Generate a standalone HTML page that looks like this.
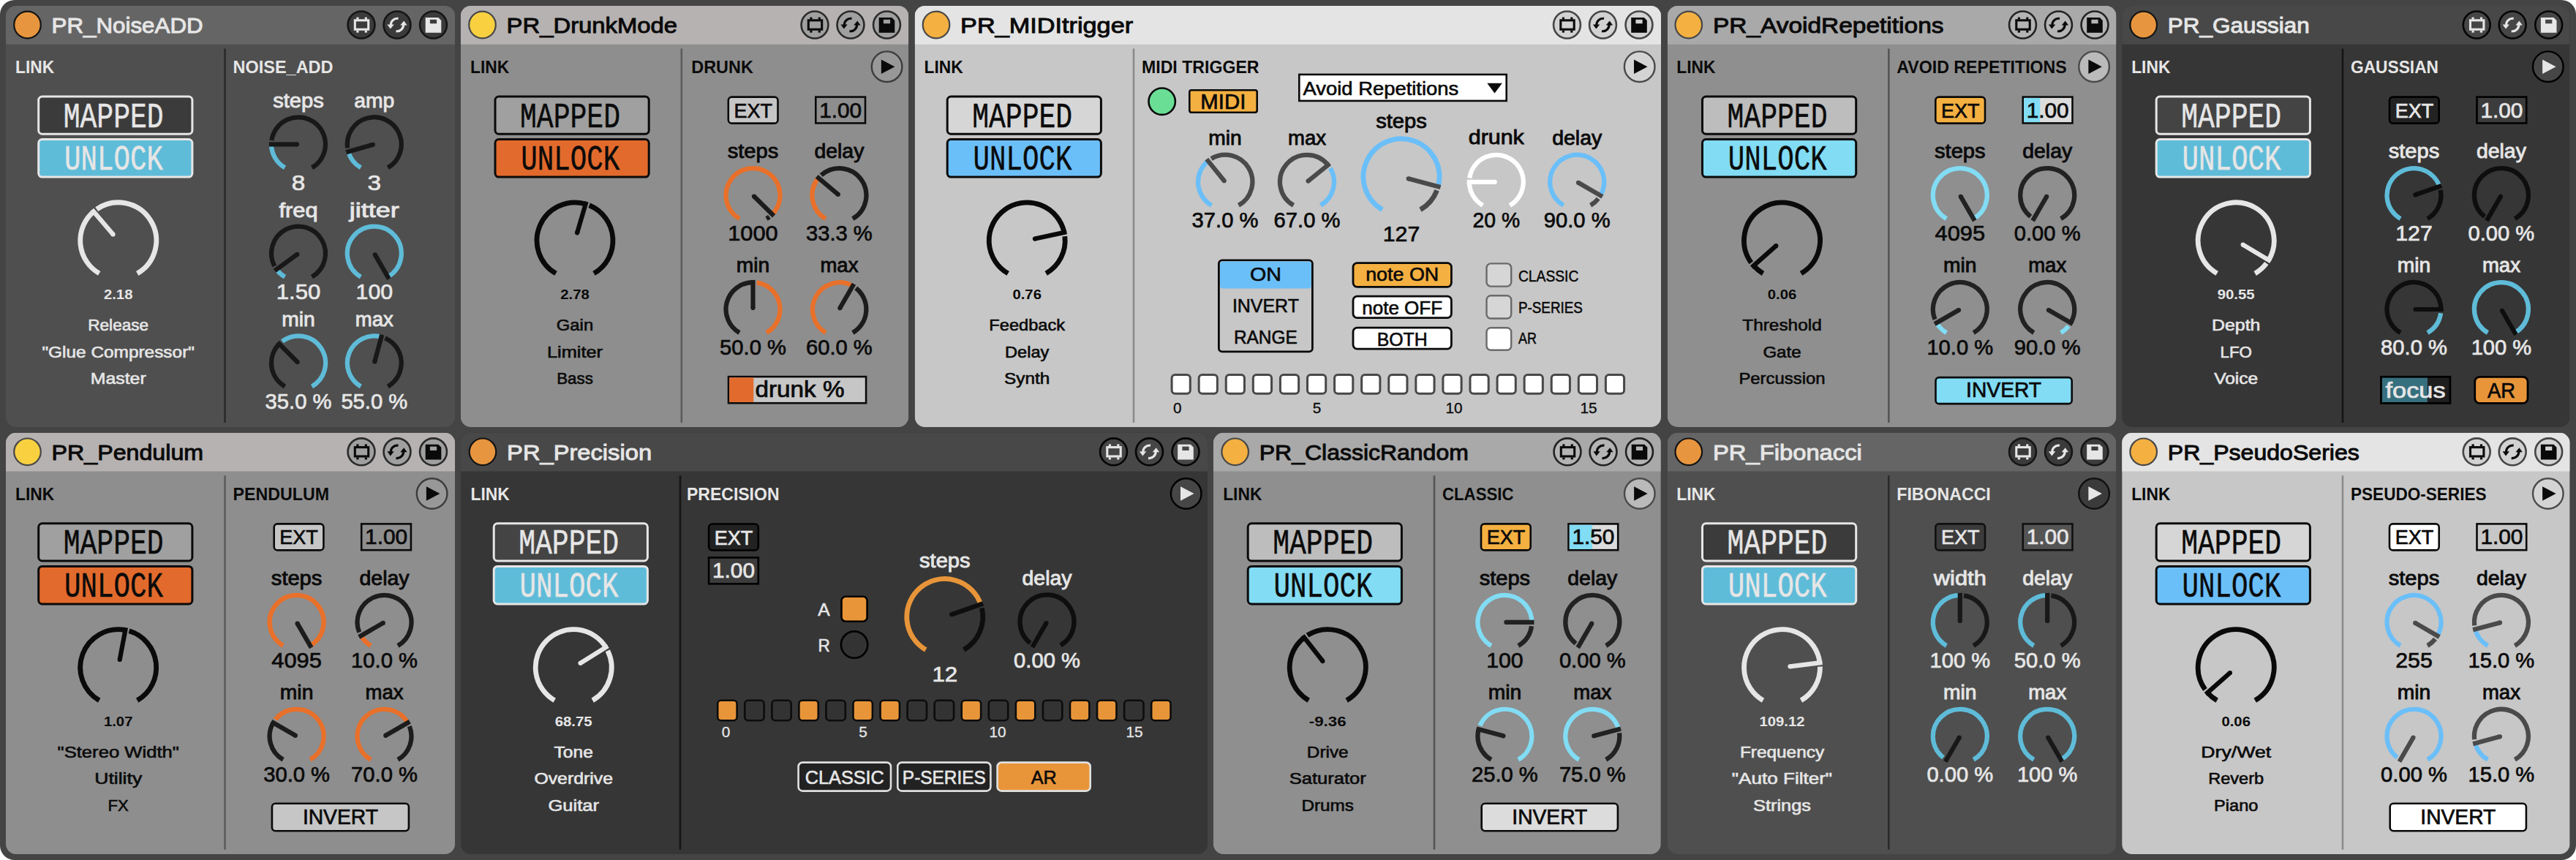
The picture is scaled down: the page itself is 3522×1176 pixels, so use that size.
<!DOCTYPE html>
<html><head><meta charset="utf-8"><title>PR devices</title>
<style>html,body{margin:0;padding:0;background:#444444}svg{display:block}</style>
</head><body>
<svg width="3522" height="1176" viewBox="0 0 3522 1176" font-family="Liberation Sans, Arial, sans-serif">
<rect x="0" y="0" width="3522" height="1176" fill="#444444"/>
<g><clipPath id="c8_8"><rect x="8" y="8" width="614.1" height="576" rx="14"/></clipPath>
<g clip-path="url(#c8_8)">
<rect x="8" y="8" width="614.1" height="576" fill="#4f4f4f"/>
<rect x="8" y="8" width="614.1" height="52.7" fill="#656565"/>
</g></g>
<circle cx="37.5" cy="34" r="18.3" fill="#e8953f" stroke="#141414" stroke-width="2.2"/>
<text x="70.6" y="44.9" font-size="29.6" fill="#e6e6e6" stroke="#e6e6e6" stroke-width="0.95" textLength="207" lengthAdjust="spacingAndGlyphs">PR_NoiseADD</text>
<circle cx="494" cy="34" r="18.45" fill="#3b3b3b" stroke="#151515" stroke-width="2.6"/>
<rect x="485.3" y="27.8" width="18.4" height="12.4" fill="none" stroke="#e6e6e6" stroke-width="3.1"/>
<rect x="487.3" y="23.6" width="3.2" height="3" fill="#e6e6e6"/>
<rect x="487.3" y="41.6" width="3.2" height="3" fill="#e6e6e6"/>
<rect x="498.7" y="23.6" width="3.2" height="3" fill="#e6e6e6"/>
<rect x="498.7" y="41.6" width="3.2" height="3" fill="#e6e6e6"/>
<circle cx="543" cy="34" r="18.45" fill="#3b3b3b" stroke="#151515" stroke-width="2.6"/>
<g transform="translate(543 34)" fill="none" stroke="#e6e6e6" stroke-width="3.2"><path d="M1.5 -8.6A8.6 8.6 0 0 0 -8.4 1.5"/><path d="M-1.5 8.6A8.6 8.6 0 0 0 8.4 -1.5"/></g>
<path d="M529.4 33.5L538.8 33.5L533.8 39.6Z" fill="#e6e6e6"/>
<path d="M556.6 34.5L547.2 34.5L552.2 28.4Z" fill="#e6e6e6"/>
<circle cx="592.5" cy="34" r="18.45" fill="#3b3b3b" stroke="#151515" stroke-width="2.6"/>
<path d="M581.7 24H599.3L603.3 28V44.8H581.7Z" fill="#e6e6e6"/>
<rect x="587.9" y="26.8" width="9.2" height="5.4" fill="#3b3b3b"/>
<text x="21" y="100" font-size="23.8" fill="#e6e6e6" font-weight="bold" textLength="53.2" lengthAdjust="spacingAndGlyphs">LINK</text>
<rect x="306.2" y="66.5" width="2.6" height="511.5" fill="#2b2b2b"/>
<text x="318.5" y="100" font-size="23.8" fill="#e6e6e6" font-weight="bold" textLength="137" lengthAdjust="spacingAndGlyphs">NOISE_ADD</text>
<rect x="52.7" y="132" width="210.2" height="51.2" fill="#3b3b3b" rx="5" stroke="#e6e6e6" stroke-width="3"/>
<text x="155.2" y="173.6" font-size="47.5" fill="#e6e6e6" stroke="#e6e6e6" stroke-width="0.5" text-anchor="middle" textLength="137" lengthAdjust="spacingAndGlyphs" font-family="Liberation Mono, DejaVu Sans Mono, monospace">MAPPED</text>
<rect x="52.7" y="190.6" width="210.2" height="51.5" fill="#5fbcd9" rx="5" stroke="#e6e6e6" stroke-width="3"/>
<text x="155.4" y="232.2" font-size="47.5" fill="#e6e6e6" stroke="#e6e6e6" stroke-width="0.5" text-anchor="middle" textLength="135" lengthAdjust="spacingAndGlyphs" font-family="Liberation Mono, DejaVu Sans Mono, monospace">UNLOCK</text>
<path d="M135.7 373.93A52 52 0 0 1 128 289.3" fill="none" stroke="#e6e6e6" stroke-width="6.8"/>
<path d="M132.2 286.08A52 52 0 1 1 187.7 373.93" fill="none" stroke="#e6e6e6" stroke-width="6.8"/>
<path d="M154.57 320.52L125.79 286.71" stroke="#e6e6e6" stroke-width="6.2"/>
<circle cx="154.57" cy="320.52" r="3.1" fill="#e6e6e6"/>
<text x="161.7" y="408.8" font-size="17.8" fill="#e6e6e6" text-anchor="middle" font-weight="bold" textLength="39.5" lengthAdjust="spacingAndGlyphs">2.18</text>
<text x="161.7" y="452" font-size="22.3" fill="#e6e6e6" stroke="#e6e6e6" stroke-width="0.62" text-anchor="middle" textLength="83" lengthAdjust="spacingAndGlyphs">Release</text>
<text x="161.7" y="488.5" font-size="22.3" fill="#e6e6e6" stroke="#e6e6e6" stroke-width="0.62" text-anchor="middle" textLength="208.5" lengthAdjust="spacingAndGlyphs">&quot;Glue Compressor&quot;</text>
<text x="161.7" y="525" font-size="22.3" fill="#e6e6e6" stroke="#e6e6e6" stroke-width="0.62" text-anchor="middle" textLength="76" lengthAdjust="spacingAndGlyphs">Master</text>
<path d="M371.4 192.02A36.98 36.98 0 1 1 426.49 229.32" fill="none" stroke="#181818" stroke-width="6.25"/>
<path d="M389.51 229.32A36.98 36.98 0 0 1 371.02 197.3" fill="none" stroke="#5fbcd9" stroke-width="6.25"/>
<path d="M406 197.3L367.9 197.3" stroke="#181818" stroke-width="6.2"/>
<circle cx="406" cy="197.3" r="3.1" fill="#181818"/>
<text x="408" y="147.3" font-size="26.8" fill="#e6e6e6" stroke="#e6e6e6" stroke-width="0.85" text-anchor="middle" textLength="69.5" lengthAdjust="spacingAndGlyphs">steps</text>
<text x="408" y="259.6" font-size="28.7" fill="#e6e6e6" stroke="#e6e6e6" stroke-width="0.7" text-anchor="middle" textLength="18.5" lengthAdjust="spacingAndGlyphs">8</text>
<path d="M475.17 202.31A36.98 36.98 0 1 1 530.29 229.32" fill="none" stroke="#181818" stroke-width="6.25"/>
<path d="M493.31 229.32A36.98 36.98 0 0 1 476.26 207.49" fill="none" stroke="#5fbcd9" stroke-width="6.25"/>
<path d="M509.88 197.85L473.25 208.35" stroke="#181818" stroke-width="6.2"/>
<circle cx="509.88" cy="197.85" r="3.1" fill="#181818"/>
<text x="511.8" y="147.3" font-size="26.8" fill="#e6e6e6" stroke="#e6e6e6" stroke-width="0.85" text-anchor="middle" textLength="55" lengthAdjust="spacingAndGlyphs">amp</text>
<text x="511.8" y="259.6" font-size="28.7" fill="#e6e6e6" stroke="#e6e6e6" stroke-width="0.7" text-anchor="middle" textLength="18.5" lengthAdjust="spacingAndGlyphs">3</text>
<path d="M375.29 363.84A36.98 36.98 0 1 1 426.49 378.62" fill="none" stroke="#181818" stroke-width="6.25"/>
<path d="M389.51 378.62A36.98 36.98 0 0 1 378.09 368.33" fill="none" stroke="#5fbcd9" stroke-width="6.25"/>
<path d="M406.38 347.78L375.56 370.17" stroke="#181818" stroke-width="6.2"/>
<circle cx="406.38" cy="347.78" r="3.1" fill="#181818"/>
<text x="408" y="296.6" font-size="26.8" fill="#e6e6e6" stroke="#e6e6e6" stroke-width="0.85" text-anchor="middle" textLength="53" lengthAdjust="spacingAndGlyphs">freq</text>
<text x="408" y="408.9" font-size="28.7" fill="#e6e6e6" stroke="#e6e6e6" stroke-width="0.7" text-anchor="middle" textLength="60.5" lengthAdjust="spacingAndGlyphs">1.50</text>
<path d="M493.31 378.62A36.98 36.98 0 1 1 530.29 378.62" fill="none" stroke="#5fbcd9" stroke-width="6.25"/>
<path d="M512.8 348.33L531.85 381.33" stroke="#181818" stroke-width="6.2"/>
<circle cx="512.8" cy="348.33" r="3.1" fill="#181818"/>
<text x="511.8" y="296.6" font-size="26.8" fill="#e6e6e6" stroke="#e6e6e6" stroke-width="0.85" text-anchor="middle" textLength="68" lengthAdjust="spacingAndGlyphs">jitter</text>
<text x="511.8" y="408.9" font-size="28.7" fill="#e6e6e6" stroke="#e6e6e6" stroke-width="0.7" text-anchor="middle" textLength="50.5" lengthAdjust="spacingAndGlyphs">100</text>
<path d="M389.51 528.42A36.98 36.98 0 0 1 381.85 470.25" fill="none" stroke="#181818" stroke-width="6.25"/>
<path d="M385.86 466.79A36.98 36.98 0 1 1 426.49 528.42" fill="none" stroke="#5fbcd9" stroke-width="6.25"/>
<path d="M406.59 494.99L379.65 468.05" stroke="#181818" stroke-width="6.2"/>
<circle cx="406.59" cy="494.99" r="3.1" fill="#181818"/>
<text x="408" y="446.4" font-size="26.8" fill="#e6e6e6" stroke="#e6e6e6" stroke-width="0.85" text-anchor="middle" textLength="45.5" lengthAdjust="spacingAndGlyphs">min</text>
<text x="408" y="558.7" font-size="28.7" fill="#e6e6e6" stroke="#e6e6e6" stroke-width="0.7" text-anchor="middle" textLength="90.8" lengthAdjust="spacingAndGlyphs">35.0 %</text>
<path d="M526.37 462.42A36.98 36.98 0 0 1 530.29 528.42" fill="none" stroke="#181818" stroke-width="6.25"/>
<path d="M493.31 528.42A36.98 36.98 0 0 1 521.37 460.68" fill="none" stroke="#5fbcd9" stroke-width="6.25"/>
<path d="M512.32 494.47L522.18 457.67" stroke="#181818" stroke-width="6.2"/>
<circle cx="512.32" cy="494.47" r="3.1" fill="#181818"/>
<text x="511.8" y="446.4" font-size="26.8" fill="#e6e6e6" stroke="#e6e6e6" stroke-width="0.85" text-anchor="middle" textLength="52" lengthAdjust="spacingAndGlyphs">max</text>
<text x="511.8" y="558.7" font-size="28.7" fill="#e6e6e6" stroke="#e6e6e6" stroke-width="0.7" text-anchor="middle" textLength="90.8" lengthAdjust="spacingAndGlyphs">55.0 %</text>
<g><clipPath id="c630_8"><rect x="629.8" y="8" width="612.4" height="576" rx="14"/></clipPath>
<g clip-path="url(#c630_8)">
<rect x="629.8" y="8" width="612.4" height="576" fill="#8e8e8e"/>
<rect x="629.8" y="8" width="612.4" height="52.7" fill="#b6b2b1"/>
</g></g>
<circle cx="659.5" cy="34" r="18.3" fill="#f8d040" stroke="#484848" stroke-width="2.2"/>
<text x="692.6" y="44.9" font-size="29.6" fill="#0a0a0a" stroke="#0a0a0a" stroke-width="0.95" textLength="233.5" lengthAdjust="spacingAndGlyphs">PR_DrunkMode</text>
<circle cx="1114" cy="34" r="18.45" fill="#a0a0a0" stroke="#2a2a2a" stroke-width="2.6"/>
<rect x="1105.3" y="27.8" width="18.4" height="12.4" fill="none" stroke="#0a0a0a" stroke-width="3.1"/>
<rect x="1107.3" y="23.6" width="3.2" height="3" fill="#0a0a0a"/>
<rect x="1107.3" y="41.6" width="3.2" height="3" fill="#0a0a0a"/>
<rect x="1118.7" y="23.6" width="3.2" height="3" fill="#0a0a0a"/>
<rect x="1118.7" y="41.6" width="3.2" height="3" fill="#0a0a0a"/>
<circle cx="1163" cy="34" r="18.45" fill="#a0a0a0" stroke="#2a2a2a" stroke-width="2.6"/>
<g transform="translate(1163 34)" fill="none" stroke="#0a0a0a" stroke-width="3.2"><path d="M1.5 -8.6A8.6 8.6 0 0 0 -8.4 1.5"/><path d="M-1.5 8.6A8.6 8.6 0 0 0 8.4 -1.5"/></g>
<path d="M1149.4 33.5L1158.8 33.5L1153.8 39.6Z" fill="#0a0a0a"/>
<path d="M1176.6 34.5L1167.2 34.5L1172.2 28.4Z" fill="#0a0a0a"/>
<circle cx="1212.5" cy="34" r="18.45" fill="#a0a0a0" stroke="#2a2a2a" stroke-width="2.6"/>
<path d="M1201.7 24H1219.3L1223.3 28V44.8H1201.7Z" fill="#0a0a0a"/>
<rect x="1207.9" y="26.8" width="9.2" height="5.4" fill="#a0a0a0"/>
<text x="643" y="100" font-size="23.8" fill="#0a0a0a" font-weight="bold" textLength="53.2" lengthAdjust="spacingAndGlyphs">LINK</text>
<rect x="930.5" y="66.5" width="2.6" height="511.5" fill="#5c5c5c"/>
<text x="945.3" y="100" font-size="23.8" fill="#0a0a0a" font-weight="bold" textLength="84.5" lengthAdjust="spacingAndGlyphs">DRUNK</text>
<circle cx="1212.6" cy="91.2" r="20.8" fill="#989898" stroke="#3c3c3c" stroke-width="2.4"/>
<path d="M1204.9 81.4L1223.4 91.2L1204.9 101Z" fill="#0a0a0a"/>
<rect x="677" y="132" width="210.2" height="51.2" fill="#a0a0a0" rx="5" stroke="#0a0a0a" stroke-width="3"/>
<text x="779.5" y="173.6" font-size="47.5" fill="#0a0a0a" stroke="#0a0a0a" stroke-width="0.5" text-anchor="middle" textLength="137" lengthAdjust="spacingAndGlyphs" font-family="Liberation Mono, DejaVu Sans Mono, monospace">MAPPED</text>
<rect x="677" y="190.6" width="210.2" height="51.5" fill="#e26a2c" rx="5" stroke="#0a0a0a" stroke-width="3"/>
<text x="779.7" y="232.2" font-size="47.5" fill="#0a0a0a" stroke="#0a0a0a" stroke-width="0.5" text-anchor="middle" textLength="135" lengthAdjust="spacingAndGlyphs" font-family="Liberation Mono, DejaVu Sans Mono, monospace">UNLOCK</text>
<path d="M760 373.93A52 52 0 0 1 800.68 279.02" fill="none" stroke="#0a0a0a" stroke-width="6.8"/>
<path d="M805.68 280.77A52 52 0 0 1 812 373.93" fill="none" stroke="#0a0a0a" stroke-width="6.8"/>
<path d="M789.11 318.35L801.64 275.75" stroke="#0a0a0a" stroke-width="6.2"/>
<circle cx="789.11" cy="318.35" r="3.1" fill="#0a0a0a"/>
<text x="786" y="408.8" font-size="17.8" fill="#0a0a0a" text-anchor="middle" font-weight="bold" textLength="39.5" lengthAdjust="spacingAndGlyphs">2.78</text>
<text x="786" y="452" font-size="22.3" fill="#0a0a0a" stroke="#0a0a0a" stroke-width="0.62" text-anchor="middle" textLength="50.3" lengthAdjust="spacingAndGlyphs">Gain</text>
<text x="786" y="488.5" font-size="22.3" fill="#0a0a0a" stroke="#0a0a0a" stroke-width="0.62" text-anchor="middle" textLength="76.1" lengthAdjust="spacingAndGlyphs">Limiter</text>
<text x="786" y="525" font-size="22.3" fill="#0a0a0a" stroke="#0a0a0a" stroke-width="0.62" text-anchor="middle" textLength="49.6" lengthAdjust="spacingAndGlyphs">Bass</text>
<rect x="995.8" y="132.6" width="67.7" height="36" fill="#c6c6c6" rx="4.7" stroke="#0a0a0a" stroke-width="2.6"/>
<text x="1029.7" y="160.6" font-size="27.6" fill="#0a0a0a" stroke="#0a0a0a" stroke-width="0.66" text-anchor="middle" textLength="52.5" lengthAdjust="spacingAndGlyphs">EXT</text>
<rect x="1115.3" y="132.6" width="67.7" height="35.8" fill="#8e8e8e" stroke="#0a0a0a" stroke-width="2.6"/>
<text x="1149.2" y="160.5" font-size="28.6" fill="#0a0a0a" stroke="#0a0a0a" stroke-width="0.69" text-anchor="middle" textLength="58" lengthAdjust="spacingAndGlyphs">1.00</text>
<path d="M1051.9 296.52A36.98 36.98 0 0 1 1047.99 299.12" fill="none" stroke="#1c1c1c" stroke-width="6.25"/>
<path d="M1011.01 299.12A36.98 36.98 0 1 1 1055.87 293.02" fill="none" stroke="#e8702a" stroke-width="6.25"/>
<path d="M1030.93 268.5L1058.1 295.21" stroke="#1c1c1c" stroke-width="6.2"/>
<circle cx="1030.93" cy="268.5" r="3.1" fill="#1c1c1c"/>
<text x="1029.5" y="216.3" font-size="26.8" fill="#0a0a0a" stroke="#0a0a0a" stroke-width="0.85" text-anchor="middle" textLength="69.5" lengthAdjust="spacingAndGlyphs">steps</text>
<text x="1029.5" y="329" font-size="28.7" fill="#0a0a0a" stroke="#0a0a0a" stroke-width="0.7" text-anchor="middle" textLength="68.5" lengthAdjust="spacingAndGlyphs">1000</text>
<path d="M1122.76 239.53A36.98 36.98 0 1 1 1165.89 299.12" fill="none" stroke="#1c1c1c" stroke-width="6.25"/>
<path d="M1128.91 299.12A36.98 36.98 0 0 1 1119.08 243.33" fill="none" stroke="#e8702a" stroke-width="6.25"/>
<path d="M1145.87 265.81L1116.68 241.32" stroke="#1c1c1c" stroke-width="6.2"/>
<circle cx="1145.87" cy="265.81" r="3.1" fill="#1c1c1c"/>
<text x="1147.4" y="216.3" font-size="26.8" fill="#0a0a0a" stroke="#0a0a0a" stroke-width="0.85" text-anchor="middle" textLength="68" lengthAdjust="spacingAndGlyphs">delay</text>
<text x="1147.4" y="329" font-size="28.7" fill="#0a0a0a" stroke="#0a0a0a" stroke-width="0.7" text-anchor="middle" textLength="90.8" lengthAdjust="spacingAndGlyphs">33.3 %</text>
<path d="M1011.01 455.02A36.98 36.98 0 0 1 1029.5 386.02" fill="none" stroke="#1c1c1c" stroke-width="6.25"/>
<path d="M1034.78 386.4A36.98 36.98 0 0 1 1047.99 455.02" fill="none" stroke="#e8702a" stroke-width="6.25"/>
<path d="M1029.5 421L1029.5 382.9" stroke="#1c1c1c" stroke-width="6.2"/>
<circle cx="1029.5" cy="421" r="3.1" fill="#1c1c1c"/>
<text x="1029.5" y="372.2" font-size="26.8" fill="#0a0a0a" stroke="#0a0a0a" stroke-width="0.85" text-anchor="middle" textLength="45.5" lengthAdjust="spacingAndGlyphs">min</text>
<text x="1029.5" y="484.9" font-size="28.7" fill="#0a0a0a" stroke="#0a0a0a" stroke-width="0.7" text-anchor="middle" textLength="90.8" lengthAdjust="spacingAndGlyphs">50.0 %</text>
<path d="M1170.27 393.95A36.98 36.98 0 0 1 1165.89 455.02" fill="none" stroke="#1c1c1c" stroke-width="6.25"/>
<path d="M1128.91 455.02A36.98 36.98 0 0 1 1165.89 390.98" fill="none" stroke="#e8702a" stroke-width="6.25"/>
<path d="M1148.4 421.27L1167.45 388.27" stroke="#1c1c1c" stroke-width="6.2"/>
<circle cx="1148.4" cy="421.27" r="3.1" fill="#1c1c1c"/>
<text x="1147.4" y="372.2" font-size="26.8" fill="#0a0a0a" stroke="#0a0a0a" stroke-width="0.85" text-anchor="middle" textLength="52" lengthAdjust="spacingAndGlyphs">max</text>
<text x="1147.4" y="484.9" font-size="28.7" fill="#0a0a0a" stroke="#0a0a0a" stroke-width="0.7" text-anchor="middle" textLength="90.8" lengthAdjust="spacingAndGlyphs">60.0 %</text>
<rect x="996" y="515.1" width="188.1" height="36.1" fill="#c6c6c6" stroke="#0a0a0a" stroke-width="2.6"/>
<rect x="997.3" y="516.4" width="33" height="33.5" fill="#e26a2c"/>
<text x="1032.5" y="542.6" font-size="30.8" fill="#0a0a0a" stroke="#0a0a0a" stroke-width="0.74" textLength="122" lengthAdjust="spacingAndGlyphs">drunk %</text>
<g><clipPath id="c1250_8"><rect x="1250.7" y="8" width="1020.3" height="576" rx="14"/></clipPath>
<g clip-path="url(#c1250_8)">
<rect x="1250.7" y="8" width="1020.3" height="576" fill="#c7c7c7"/>
<rect x="1250.7" y="8" width="1020.3" height="52.7" fill="#e4e4e4"/>
</g></g>
<circle cx="1280" cy="34" r="18.3" fill="#f4b041" stroke="#484848" stroke-width="2.2"/>
<text x="1313.1" y="44.9" font-size="29.6" fill="#0a0a0a" stroke="#0a0a0a" stroke-width="0.95" textLength="236" lengthAdjust="spacingAndGlyphs">PR_MIDItrigger</text>
<circle cx="2142.5" cy="34" r="18.45" fill="#d2d2d2" stroke="#454545" stroke-width="2.6"/>
<rect x="2133.8" y="27.8" width="18.4" height="12.4" fill="none" stroke="#0a0a0a" stroke-width="3.1"/>
<rect x="2135.8" y="23.6" width="3.2" height="3" fill="#0a0a0a"/>
<rect x="2135.8" y="41.6" width="3.2" height="3" fill="#0a0a0a"/>
<rect x="2147.2" y="23.6" width="3.2" height="3" fill="#0a0a0a"/>
<rect x="2147.2" y="41.6" width="3.2" height="3" fill="#0a0a0a"/>
<circle cx="2191.5" cy="34" r="18.45" fill="#d2d2d2" stroke="#454545" stroke-width="2.6"/>
<g transform="translate(2191.5 34)" fill="none" stroke="#0a0a0a" stroke-width="3.2"><path d="M1.5 -8.6A8.6 8.6 0 0 0 -8.4 1.5"/><path d="M-1.5 8.6A8.6 8.6 0 0 0 8.4 -1.5"/></g>
<path d="M2177.9 33.5L2187.3 33.5L2182.3 39.6Z" fill="#0a0a0a"/>
<path d="M2205.1 34.5L2195.7 34.5L2200.7 28.4Z" fill="#0a0a0a"/>
<circle cx="2241" cy="34" r="18.45" fill="#d2d2d2" stroke="#454545" stroke-width="2.6"/>
<path d="M2230.2 24H2247.8L2251.8 28V44.8H2230.2Z" fill="#0a0a0a"/>
<rect x="2236.4" y="26.8" width="9.2" height="5.4" fill="#d2d2d2"/>
<text x="1263.5" y="100" font-size="23.8" fill="#0a0a0a" font-weight="bold" textLength="53.2" lengthAdjust="spacingAndGlyphs">LINK</text>
<rect x="1548.7" y="66.5" width="2.6" height="511.5" fill="#8a8a8a"/>
<text x="1561" y="100" font-size="23.8" fill="#0a0a0a" font-weight="bold" textLength="160.5" lengthAdjust="spacingAndGlyphs">MIDI TRIGGER</text>
<circle cx="2241.7" cy="91.2" r="20.8" fill="#d4d4d4" stroke="#4a4a4a" stroke-width="2.4"/>
<path d="M2234 81.4L2252.5 91.2L2234 101Z" fill="#0a0a0a"/>
<rect x="1295.2" y="132" width="210.2" height="51.2" fill="#d6d6d6" rx="5" stroke="#0a0a0a" stroke-width="3"/>
<text x="1397.7" y="173.6" font-size="47.5" fill="#0a0a0a" stroke="#0a0a0a" stroke-width="0.5" text-anchor="middle" textLength="137" lengthAdjust="spacingAndGlyphs" font-family="Liberation Mono, DejaVu Sans Mono, monospace">MAPPED</text>
<rect x="1295.2" y="190.6" width="210.2" height="51.5" fill="#6bbff9" rx="5" stroke="#0a0a0a" stroke-width="3"/>
<text x="1397.9" y="232.2" font-size="47.5" fill="#0a0a0a" stroke="#0a0a0a" stroke-width="0.5" text-anchor="middle" textLength="135" lengthAdjust="spacingAndGlyphs" font-family="Liberation Mono, DejaVu Sans Mono, monospace">UNLOCK</text>
<path d="M1378.2 373.93A52 52 0 1 1 1455.01 317.82" fill="none" stroke="#0a0a0a" stroke-width="6.8"/>
<path d="M1455.87 323.05A52 52 0 0 1 1430.2 373.93" fill="none" stroke="#0a0a0a" stroke-width="6.8"/>
<path d="M1414.95 326.56L1458.33 317.1" stroke="#0a0a0a" stroke-width="6.2"/>
<circle cx="1414.95" cy="326.56" r="3.1" fill="#0a0a0a"/>
<text x="1404.2" y="408.8" font-size="17.8" fill="#0a0a0a" text-anchor="middle" font-weight="bold" textLength="39.5" lengthAdjust="spacingAndGlyphs">0.76</text>
<text x="1404.2" y="452" font-size="22.3" fill="#0a0a0a" stroke="#0a0a0a" stroke-width="0.62" text-anchor="middle" textLength="103.8" lengthAdjust="spacingAndGlyphs">Feedback</text>
<text x="1404.2" y="488.5" font-size="22.3" fill="#0a0a0a" stroke="#0a0a0a" stroke-width="0.62" text-anchor="middle" textLength="60.3" lengthAdjust="spacingAndGlyphs">Delay</text>
<text x="1404.2" y="525" font-size="22.3" fill="#0a0a0a" stroke="#0a0a0a" stroke-width="0.62" text-anchor="middle" textLength="62.2" lengthAdjust="spacingAndGlyphs">Synth</text>
<circle cx="1588.7" cy="138.7" r="18.2" fill="#6bde96" stroke="#0a0a0a" stroke-width="2.6"/>
<rect x="1626.3" y="123.3" width="92.4" height="30.4" fill="#f4b041" rx="2.7" stroke="#0a0a0a" stroke-width="2.6"/>
<text x="1672.3" y="148.8" font-size="29" fill="#0a0a0a" stroke="#0a0a0a" stroke-width="0.7" text-anchor="middle" textLength="62" lengthAdjust="spacingAndGlyphs">MIDI</text>
<rect x="1776.3" y="101.9" width="283.4" height="36" fill="#ffffff" stroke="#0a0a0a" stroke-width="2.6"/>
<text x="1781.6" y="130" font-size="25.4" fill="#0a0a0a" stroke="#0a0a0a" stroke-width="0.61" textLength="212.6" lengthAdjust="spacingAndGlyphs">Avoid Repetitions</text>
<path d="M2033.3 113.7H2053.8L2043.5 127.6Z" fill="#0a0a0a"/>
<path d="M1656.07 217.04A36.98 36.98 0 1 1 1693.49 280.82" fill="none" stroke="#4a4a4a" stroke-width="6.25"/>
<path d="M1656.51 280.82A36.98 36.98 0 0 1 1651.73 220.07" fill="none" stroke="#6bbff9" stroke-width="6.25"/>
<path d="M1673.74 247.25L1649.76 217.64" stroke="#4a4a4a" stroke-width="6.2"/>
<circle cx="1673.74" cy="247.25" r="3.1" fill="#4a4a4a"/>
<text x="1675" y="198.3" font-size="26.8" fill="#0a0a0a" stroke="#0a0a0a" stroke-width="0.85" text-anchor="middle" textLength="45.5" lengthAdjust="spacingAndGlyphs">min</text>
<text x="1675" y="310.8" font-size="28.7" fill="#0a0a0a" stroke="#0a0a0a" stroke-width="0.7" text-anchor="middle" textLength="90.8" lengthAdjust="spacingAndGlyphs">37.0 %</text>
<path d="M1768.51 280.82A36.98 36.98 0 1 1 1815.73 225.53" fill="none" stroke="#4a4a4a" stroke-width="6.25"/>
<path d="M1818.76 229.87A36.98 36.98 0 0 1 1805.49 280.82" fill="none" stroke="#6bbff9" stroke-width="6.25"/>
<path d="M1788.55 247.54L1818.16 223.56" stroke="#4a4a4a" stroke-width="6.2"/>
<circle cx="1788.55" cy="247.54" r="3.1" fill="#4a4a4a"/>
<text x="1787" y="198.3" font-size="26.8" fill="#0a0a0a" stroke="#0a0a0a" stroke-width="0.85" text-anchor="middle" textLength="52" lengthAdjust="spacingAndGlyphs">max</text>
<text x="1787" y="310.8" font-size="28.7" fill="#0a0a0a" stroke="#0a0a0a" stroke-width="0.7" text-anchor="middle" textLength="90.8" lengthAdjust="spacingAndGlyphs">67.0 %</text>
<path d="M1964.6 260.2A52 52 0 0 1 1942 286.73" fill="none" stroke="#4a4a4a" stroke-width="6.8"/>
<path d="M1890 286.73A52 52 0 1 1 1966.23 255.16" fill="none" stroke="#6bbff9" stroke-width="6.8"/>
<path d="M1925.66 244.29L1969.51 256.04" stroke="#4a4a4a" stroke-width="6.2"/>
<circle cx="1925.66" cy="244.29" r="3.1" fill="#4a4a4a"/>
<text x="1916" y="174.5" font-size="26.8" fill="#0a0a0a" stroke="#0a0a0a" stroke-width="0.85" text-anchor="middle" textLength="69.5" lengthAdjust="spacingAndGlyphs">steps</text>
<text x="1916" y="329.7" font-size="28.7" fill="#0a0a0a" stroke="#0a0a0a" stroke-width="0.7" text-anchor="middle" textLength="50.5" lengthAdjust="spacingAndGlyphs">127</text>
<path d="M2027.31 280.82A36.98 36.98 0 0 1 2008.83 248.8" fill="none" stroke="#ffffff" stroke-width="6.25"/>
<path d="M2009.2 243.52A36.98 36.98 0 1 1 2064.29 280.82" fill="none" stroke="#ffffff" stroke-width="6.25"/>
<path d="M2043.8 248.8L2005.7 248.8" stroke="#ffffff" stroke-width="6.2"/>
<circle cx="2043.8" cy="248.8" r="3.1" fill="#ffffff"/>
<text x="2045.8" y="196.8" font-size="26.8" fill="#0a0a0a" stroke="#0a0a0a" stroke-width="0.85" text-anchor="middle" textLength="76" lengthAdjust="spacingAndGlyphs">drunk</text>
<text x="2045.8" y="310.8" font-size="28.7" fill="#0a0a0a" stroke="#0a0a0a" stroke-width="0.7" text-anchor="middle" textLength="64.5" lengthAdjust="spacingAndGlyphs">20 %</text>
<path d="M2185.25 271.67A36.98 36.98 0 0 1 2174.69 280.82" fill="none" stroke="#4a4a4a" stroke-width="6.25"/>
<path d="M2137.71 280.82A36.98 36.98 0 1 1 2188.22 267.29" fill="none" stroke="#6bbff9" stroke-width="6.25"/>
<path d="M2157.93 249.8L2190.93 268.85" stroke="#4a4a4a" stroke-width="6.2"/>
<circle cx="2157.93" cy="249.8" r="3.1" fill="#4a4a4a"/>
<text x="2156.2" y="198.3" font-size="26.8" fill="#0a0a0a" stroke="#0a0a0a" stroke-width="0.85" text-anchor="middle" textLength="68" lengthAdjust="spacingAndGlyphs">delay</text>
<text x="2156.2" y="310.8" font-size="28.7" fill="#0a0a0a" stroke="#0a0a0a" stroke-width="0.7" text-anchor="middle" textLength="90.8" lengthAdjust="spacingAndGlyphs">90.0 %</text>
<rect x="1666.4" y="355.9" width="128" height="125" fill="#c7c7c7" rx="4.6" stroke="#0a0a0a" stroke-width="2.8"/>
<rect x="1668" y="357.4" width="124.8" height="37.2" fill="#6bbff9" rx="4"/>
<text x="1730.4" y="384" font-size="26.3" fill="#0a0a0a" stroke="#0a0a0a" stroke-width="0.63" text-anchor="middle" textLength="43" lengthAdjust="spacingAndGlyphs">ON</text>
<text x="1730.4" y="427.3" font-size="26.3" fill="#0a0a0a" stroke="#0a0a0a" stroke-width="0.63" text-anchor="middle" textLength="91" lengthAdjust="spacingAndGlyphs">INVERT</text>
<text x="1730.4" y="469.7" font-size="26.3" fill="#0a0a0a" stroke="#0a0a0a" stroke-width="0.63" text-anchor="middle" textLength="87" lengthAdjust="spacingAndGlyphs">RANGE</text>
<rect x="1850" y="359.7" width="134.4" height="32.6" fill="#f4b041" rx="5.6" stroke="#0a0a0a" stroke-width="2.8"/>
<text x="1917.2" y="384" font-size="26.3" fill="#0a0a0a" stroke="#0a0a0a" stroke-width="0.63" text-anchor="middle" textLength="100" lengthAdjust="spacingAndGlyphs">note ON</text>
<rect x="1850" y="405.2" width="134.4" height="29.5" fill="#ffffff" rx="5.6" stroke="#0a0a0a" stroke-width="2.8"/>
<text x="1917.2" y="429.8" font-size="26.3" fill="#0a0a0a" stroke="#0a0a0a" stroke-width="0.63" text-anchor="middle" textLength="110" lengthAdjust="spacingAndGlyphs">note OFF</text>
<rect x="1850" y="448.2" width="134.4" height="28.9" fill="#ffffff" rx="5.6" stroke="#0a0a0a" stroke-width="2.8"/>
<text x="1917.2" y="472.8" font-size="26.3" fill="#0a0a0a" stroke="#0a0a0a" stroke-width="0.63" text-anchor="middle" textLength="69" lengthAdjust="spacingAndGlyphs">BOTH</text>
<rect x="2032.5" y="360.4" width="33.7" height="31.2" fill="#d6d6d6" rx="5.8" stroke="#6a6a6a" stroke-width="2.4"/>
<text x="2075.9" y="385" font-size="21.6" fill="#0a0a0a" stroke="#0a0a0a" stroke-width="0.52" textLength="82.5" lengthAdjust="spacingAndGlyphs">CLASSIC</text>
<rect x="2032.5" y="404.3" width="33.7" height="31.2" fill="#d6d6d6" rx="5.8" stroke="#6a6a6a" stroke-width="2.4"/>
<text x="2075.9" y="428" font-size="21.6" fill="#0a0a0a" stroke="#0a0a0a" stroke-width="0.52" textLength="88" lengthAdjust="spacingAndGlyphs">P-SERIES</text>
<rect x="2032.5" y="448.3" width="33.7" height="30.5" fill="#ffffff" rx="5.8" stroke="#6a6a6a" stroke-width="2.4"/>
<text x="2075.9" y="470.3" font-size="21.6" fill="#0a0a0a" stroke="#0a0a0a" stroke-width="0.52" textLength="25" lengthAdjust="spacingAndGlyphs">AR</text>
<rect x="1602.1" y="512.6" width="25.2" height="25.6" fill="#ffffff" rx="4.5" stroke="#484848" stroke-width="3"/>
<rect x="1639.18" y="512.6" width="25.2" height="25.6" fill="#ffffff" rx="4.5" stroke="#484848" stroke-width="3"/>
<rect x="1676.26" y="512.6" width="25.2" height="25.6" fill="#ffffff" rx="4.5" stroke="#484848" stroke-width="3"/>
<rect x="1713.34" y="512.6" width="25.2" height="25.6" fill="#ffffff" rx="4.5" stroke="#484848" stroke-width="3"/>
<rect x="1750.42" y="512.6" width="25.2" height="25.6" fill="#ffffff" rx="4.5" stroke="#484848" stroke-width="3"/>
<rect x="1787.5" y="512.6" width="25.2" height="25.6" fill="#ffffff" rx="4.5" stroke="#484848" stroke-width="3"/>
<rect x="1824.58" y="512.6" width="25.2" height="25.6" fill="#ffffff" rx="4.5" stroke="#484848" stroke-width="3"/>
<rect x="1861.66" y="512.6" width="25.2" height="25.6" fill="#ffffff" rx="4.5" stroke="#484848" stroke-width="3"/>
<rect x="1898.74" y="512.6" width="25.2" height="25.6" fill="#ffffff" rx="4.5" stroke="#484848" stroke-width="3"/>
<rect x="1935.82" y="512.6" width="25.2" height="25.6" fill="#ffffff" rx="4.5" stroke="#484848" stroke-width="3"/>
<rect x="1972.9" y="512.6" width="25.2" height="25.6" fill="#ffffff" rx="4.5" stroke="#484848" stroke-width="3"/>
<rect x="2009.98" y="512.6" width="25.2" height="25.6" fill="#ffffff" rx="4.5" stroke="#484848" stroke-width="3"/>
<rect x="2047.06" y="512.6" width="25.2" height="25.6" fill="#ffffff" rx="4.5" stroke="#484848" stroke-width="3"/>
<rect x="2084.14" y="512.6" width="25.2" height="25.6" fill="#ffffff" rx="4.5" stroke="#484848" stroke-width="3"/>
<rect x="2121.22" y="512.6" width="25.2" height="25.6" fill="#ffffff" rx="4.5" stroke="#484848" stroke-width="3"/>
<rect x="2158.3" y="512.6" width="25.2" height="25.6" fill="#ffffff" rx="4.5" stroke="#484848" stroke-width="3"/>
<rect x="2195.38" y="512.6" width="25.2" height="25.6" fill="#ffffff" rx="4.5" stroke="#484848" stroke-width="3"/>
<text x="1609.7" y="564.8" font-size="20.8" fill="#0a0a0a" stroke="#0a0a0a" stroke-width="0.3" text-anchor="middle">0</text>
<text x="1800.5" y="564.8" font-size="20.8" fill="#0a0a0a" stroke="#0a0a0a" stroke-width="0.3" text-anchor="middle">5</text>
<text x="1988" y="564.8" font-size="20.8" fill="#0a0a0a" stroke="#0a0a0a" stroke-width="0.3" text-anchor="middle">10</text>
<text x="2172" y="564.8" font-size="20.8" fill="#0a0a0a" stroke="#0a0a0a" stroke-width="0.3" text-anchor="middle">15</text>
<g><clipPath id="c2280_8"><rect x="2279.9" y="8" width="613.5" height="576" rx="14"/></clipPath>
<g clip-path="url(#c2280_8)">
<rect x="2279.9" y="8" width="613.5" height="576" fill="#8f8f8f"/>
<rect x="2279.9" y="8" width="613.5" height="52.7" fill="#a9a9a9"/>
</g></g>
<circle cx="2308.8" cy="34" r="18.3" fill="#f4b041" stroke="#484848" stroke-width="2.2"/>
<text x="2341.9" y="44.9" font-size="29.6" fill="#0a0a0a" stroke="#0a0a0a" stroke-width="0.95" textLength="315.6" lengthAdjust="spacingAndGlyphs">PR_AvoidRepetitions</text>
<circle cx="2765.5" cy="34" r="18.45" fill="#b4b4b4" stroke="#222222" stroke-width="2.6"/>
<rect x="2756.8" y="27.8" width="18.4" height="12.4" fill="none" stroke="#0a0a0a" stroke-width="3.1"/>
<rect x="2758.8" y="23.6" width="3.2" height="3" fill="#0a0a0a"/>
<rect x="2758.8" y="41.6" width="3.2" height="3" fill="#0a0a0a"/>
<rect x="2770.2" y="23.6" width="3.2" height="3" fill="#0a0a0a"/>
<rect x="2770.2" y="41.6" width="3.2" height="3" fill="#0a0a0a"/>
<circle cx="2814.5" cy="34" r="18.45" fill="#b4b4b4" stroke="#222222" stroke-width="2.6"/>
<g transform="translate(2814.5 34)" fill="none" stroke="#0a0a0a" stroke-width="3.2"><path d="M1.5 -8.6A8.6 8.6 0 0 0 -8.4 1.5"/><path d="M-1.5 8.6A8.6 8.6 0 0 0 8.4 -1.5"/></g>
<path d="M2800.9 33.5L2810.3 33.5L2805.3 39.6Z" fill="#0a0a0a"/>
<path d="M2828.1 34.5L2818.7 34.5L2823.7 28.4Z" fill="#0a0a0a"/>
<circle cx="2864" cy="34" r="18.45" fill="#b4b4b4" stroke="#222222" stroke-width="2.6"/>
<path d="M2853.2 24H2870.8L2874.8 28V44.8H2853.2Z" fill="#0a0a0a"/>
<rect x="2859.4" y="26.8" width="9.2" height="5.4" fill="#b4b4b4"/>
<text x="2292.3" y="100" font-size="23.8" fill="#0a0a0a" font-weight="bold" textLength="53.2" lengthAdjust="spacingAndGlyphs">LINK</text>
<rect x="2581" y="66.5" width="2.6" height="511.5" fill="#555555"/>
<text x="2593.3" y="100" font-size="23.8" fill="#0a0a0a" font-weight="bold" textLength="232.5" lengthAdjust="spacingAndGlyphs">AVOID REPETITIONS</text>
<circle cx="2863.1" cy="91.2" r="20.8" fill="#bababa" stroke="#4a4a4a" stroke-width="2.4"/>
<path d="M2855.4 81.4L2873.9 91.2L2855.4 101Z" fill="#0a0a0a"/>
<rect x="2327.5" y="132" width="210.2" height="51.2" fill="#bdbdbd" rx="5" stroke="#0a0a0a" stroke-width="3"/>
<text x="2430" y="173.6" font-size="47.5" fill="#0a0a0a" stroke="#0a0a0a" stroke-width="0.5" text-anchor="middle" textLength="137" lengthAdjust="spacingAndGlyphs" font-family="Liberation Mono, DejaVu Sans Mono, monospace">MAPPED</text>
<rect x="2327.5" y="190.6" width="210.2" height="51.5" fill="#82dcf4" rx="5" stroke="#0a0a0a" stroke-width="3"/>
<text x="2430.2" y="232.2" font-size="47.5" fill="#0a0a0a" stroke="#0a0a0a" stroke-width="0.5" text-anchor="middle" textLength="135" lengthAdjust="spacingAndGlyphs" font-family="Liberation Mono, DejaVu Sans Mono, monospace">UNLOCK</text>
<path d="M2410.5 373.93A52 52 0 0 1 2397.55 363.36" fill="none" stroke="#0a0a0a" stroke-width="6.8"/>
<path d="M2394.25 359.21A52 52 0 1 1 2462.5 373.93" fill="none" stroke="#0a0a0a" stroke-width="6.8"/>
<path d="M2428.26 336.19L2395.01 365.61" stroke="#0a0a0a" stroke-width="6.2"/>
<circle cx="2428.26" cy="336.19" r="3.1" fill="#0a0a0a"/>
<text x="2436.5" y="408.8" font-size="17.8" fill="#0a0a0a" text-anchor="middle" font-weight="bold" textLength="39.5" lengthAdjust="spacingAndGlyphs">0.06</text>
<text x="2436.5" y="452" font-size="22.3" fill="#0a0a0a" stroke="#0a0a0a" stroke-width="0.62" text-anchor="middle" textLength="108.5" lengthAdjust="spacingAndGlyphs">Threshold</text>
<text x="2436.5" y="488.5" font-size="22.3" fill="#0a0a0a" stroke="#0a0a0a" stroke-width="0.62" text-anchor="middle" textLength="52.2" lengthAdjust="spacingAndGlyphs">Gate</text>
<text x="2436.5" y="525" font-size="22.3" fill="#0a0a0a" stroke="#0a0a0a" stroke-width="0.62" text-anchor="middle" textLength="118.2" lengthAdjust="spacingAndGlyphs">Percussion</text>
<rect x="2646.3" y="132.6" width="67.7" height="36" fill="#f4b041" rx="4.7" stroke="#0a0a0a" stroke-width="2.6"/>
<text x="2680.2" y="160.6" font-size="27.6" fill="#0a0a0a" stroke="#0a0a0a" stroke-width="0.66" text-anchor="middle" textLength="52.5" lengthAdjust="spacingAndGlyphs">EXT</text>
<rect x="2765.8" y="132.6" width="67.7" height="35.8" fill="#dcdcdc" stroke="#0a0a0a" stroke-width="2.6"/>
<rect x="2767.1" y="133.9" width="22.13" height="33.2" fill="#82dcf4"/>
<text x="2799.7" y="160.5" font-size="28.6" fill="#0a0a0a" stroke="#0a0a0a" stroke-width="0.69" text-anchor="middle" textLength="58" lengthAdjust="spacingAndGlyphs">1.00</text>
<path d="M2661.31 299.12A36.98 36.98 0 1 1 2698.29 299.12" fill="none" stroke="#82dcf4" stroke-width="6.25"/>
<path d="M2680.8 268.83L2699.85 301.83" stroke="#222222" stroke-width="6.2"/>
<circle cx="2680.8" cy="268.83" r="3.1" fill="#222222"/>
<text x="2679.8" y="216.3" font-size="26.8" fill="#0a0a0a" stroke="#0a0a0a" stroke-width="0.85" text-anchor="middle" textLength="69.5" lengthAdjust="spacingAndGlyphs">steps</text>
<text x="2679.8" y="329" font-size="28.7" fill="#0a0a0a" stroke="#0a0a0a" stroke-width="0.7" text-anchor="middle" textLength="68.5" lengthAdjust="spacingAndGlyphs">4095</text>
<path d="M2776.33 296.15A36.98 36.98 0 1 1 2817.69 299.12" fill="none" stroke="#222222" stroke-width="6.25"/>
<path d="M2798.2 268.83L2779.15 301.83" stroke="#222222" stroke-width="6.2"/>
<circle cx="2798.2" cy="268.83" r="3.1" fill="#222222"/>
<text x="2799.2" y="216.3" font-size="26.8" fill="#0a0a0a" stroke="#0a0a0a" stroke-width="0.85" text-anchor="middle" textLength="68" lengthAdjust="spacingAndGlyphs">delay</text>
<text x="2799.2" y="329" font-size="28.7" fill="#0a0a0a" stroke="#0a0a0a" stroke-width="0.7" text-anchor="middle" textLength="90.8" lengthAdjust="spacingAndGlyphs">0.00 %</text>
<path d="M2645.47 436.72A36.98 36.98 0 1 1 2698.29 455.02" fill="none" stroke="#222222" stroke-width="6.25"/>
<path d="M2661.31 455.02A36.98 36.98 0 0 1 2647.78 441.49" fill="none" stroke="#82dcf4" stroke-width="6.25"/>
<path d="M2678.07 424L2645.07 443.05" stroke="#222222" stroke-width="6.2"/>
<circle cx="2678.07" cy="424" r="3.1" fill="#222222"/>
<text x="2679.8" y="372.2" font-size="26.8" fill="#0a0a0a" stroke="#0a0a0a" stroke-width="0.85" text-anchor="middle" textLength="45.5" lengthAdjust="spacingAndGlyphs">min</text>
<text x="2679.8" y="484.9" font-size="28.7" fill="#0a0a0a" stroke="#0a0a0a" stroke-width="0.7" text-anchor="middle" textLength="90.8" lengthAdjust="spacingAndGlyphs">10.0 %</text>
<path d="M2780.71 455.02A36.98 36.98 0 1 1 2831.22 441.49" fill="none" stroke="#222222" stroke-width="6.25"/>
<path d="M2828.25 445.87A36.98 36.98 0 0 1 2817.69 455.02" fill="none" stroke="#82dcf4" stroke-width="6.25"/>
<path d="M2800.93 424L2833.93 443.05" stroke="#222222" stroke-width="6.2"/>
<circle cx="2800.93" cy="424" r="3.1" fill="#222222"/>
<text x="2799.2" y="372.2" font-size="26.8" fill="#0a0a0a" stroke="#0a0a0a" stroke-width="0.85" text-anchor="middle" textLength="52" lengthAdjust="spacingAndGlyphs">max</text>
<text x="2799.2" y="484.9" font-size="28.7" fill="#0a0a0a" stroke="#0a0a0a" stroke-width="0.7" text-anchor="middle" textLength="90.8" lengthAdjust="spacingAndGlyphs">90.0 %</text>
<rect x="2646.5" y="516.1" width="186.2" height="36" fill="#82dcf4" rx="4.7" stroke="#0a0a0a" stroke-width="2.6"/>
<text x="2739.6" y="543.2" font-size="28.6" fill="#0a0a0a" stroke="#0a0a0a" stroke-width="0.69" text-anchor="middle" textLength="103" lengthAdjust="spacingAndGlyphs">INVERT</text>
<g><clipPath id="c2901_8"><rect x="2901.2" y="8" width="612.4" height="576" rx="14"/></clipPath>
<g clip-path="url(#c2901_8)">
<rect x="2901.2" y="8" width="612.4" height="576" fill="#363636"/>
<rect x="2901.2" y="8" width="612.4" height="52.7" fill="#484848"/>
</g></g>
<circle cx="2930.7" cy="34" r="18.3" fill="#e8953f" stroke="#141414" stroke-width="2.2"/>
<text x="2963.8" y="44.9" font-size="29.6" fill="#e6e6e6" stroke="#e6e6e6" stroke-width="0.95" textLength="194" lengthAdjust="spacingAndGlyphs">PR_Gaussian</text>
<circle cx="3386.2" cy="34" r="18.45" fill="#464646" stroke="#050505" stroke-width="2.6"/>
<rect x="3377.5" y="27.8" width="18.4" height="12.4" fill="none" stroke="#e6e6e6" stroke-width="3.1"/>
<rect x="3379.5" y="23.6" width="3.2" height="3" fill="#e6e6e6"/>
<rect x="3379.5" y="41.6" width="3.2" height="3" fill="#e6e6e6"/>
<rect x="3390.9" y="23.6" width="3.2" height="3" fill="#e6e6e6"/>
<rect x="3390.9" y="41.6" width="3.2" height="3" fill="#e6e6e6"/>
<circle cx="3435.2" cy="34" r="18.45" fill="#464646" stroke="#050505" stroke-width="2.6"/>
<g transform="translate(3435.2 34)" fill="none" stroke="#e6e6e6" stroke-width="3.2"><path d="M1.5 -8.6A8.6 8.6 0 0 0 -8.4 1.5"/><path d="M-1.5 8.6A8.6 8.6 0 0 0 8.4 -1.5"/></g>
<path d="M3421.6 33.5L3431 33.5L3426 39.6Z" fill="#e6e6e6"/>
<path d="M3448.8 34.5L3439.4 34.5L3444.4 28.4Z" fill="#e6e6e6"/>
<circle cx="3484.7" cy="34" r="18.45" fill="#464646" stroke="#050505" stroke-width="2.6"/>
<path d="M3473.9 24H3491.5L3495.5 28V44.8H3473.9Z" fill="#e6e6e6"/>
<rect x="3480.1" y="26.8" width="9.2" height="5.4" fill="#464646"/>
<text x="2914.2" y="100" font-size="23.8" fill="#e6e6e6" font-weight="bold" textLength="53.2" lengthAdjust="spacingAndGlyphs">LINK</text>
<rect x="3201.7" y="66.5" width="2.6" height="511.5" fill="#151515"/>
<text x="3214" y="100" font-size="23.8" fill="#e6e6e6" font-weight="bold" textLength="120" lengthAdjust="spacingAndGlyphs">GAUSSIAN</text>
<circle cx="3483.8" cy="91.2" r="20.8" fill="#464646" stroke="#000000" stroke-width="2.4"/>
<path d="M3476.1 81.4L3494.6 91.2L3476.1 101Z" fill="#e6e6e6"/>
<rect x="2948.2" y="132" width="210.2" height="51.2" fill="#444444" rx="5" stroke="#e6e6e6" stroke-width="3"/>
<text x="3050.7" y="173.6" font-size="47.5" fill="#e6e6e6" stroke="#e6e6e6" stroke-width="0.5" text-anchor="middle" textLength="137" lengthAdjust="spacingAndGlyphs" font-family="Liberation Mono, DejaVu Sans Mono, monospace">MAPPED</text>
<rect x="2948.2" y="190.6" width="210.2" height="51.5" fill="#5fbcd9" rx="5" stroke="#e6e6e6" stroke-width="3"/>
<text x="3050.9" y="232.2" font-size="47.5" fill="#e6e6e6" stroke="#e6e6e6" stroke-width="0.5" text-anchor="middle" textLength="135" lengthAdjust="spacingAndGlyphs" font-family="Liberation Mono, DejaVu Sans Mono, monospace">UNLOCK</text>
<path d="M3031.2 373.93A52 52 0 1 1 3101.77 355.68" fill="none" stroke="#e6e6e6" stroke-width="6.8"/>
<path d="M3098.82 360.08A52 52 0 0 1 3083.2 373.93" fill="none" stroke="#e6e6e6" stroke-width="6.8"/>
<path d="M3066.63 334.57L3104.69 357.43" stroke="#e6e6e6" stroke-width="6.2"/>
<circle cx="3066.63" cy="334.57" r="3.1" fill="#e6e6e6"/>
<text x="3057.2" y="408.8" font-size="17.8" fill="#e6e6e6" text-anchor="middle" font-weight="bold" textLength="51" lengthAdjust="spacingAndGlyphs">90.55</text>
<text x="3057.2" y="452" font-size="22.3" fill="#e6e6e6" stroke="#e6e6e6" stroke-width="0.62" text-anchor="middle" textLength="66.5" lengthAdjust="spacingAndGlyphs">Depth</text>
<text x="3057.2" y="488.5" font-size="22.3" fill="#e6e6e6" stroke="#e6e6e6" stroke-width="0.62" text-anchor="middle" textLength="43.4" lengthAdjust="spacingAndGlyphs">LFO</text>
<text x="3057.2" y="525" font-size="22.3" fill="#e6e6e6" stroke="#e6e6e6" stroke-width="0.62" text-anchor="middle" textLength="60.1" lengthAdjust="spacingAndGlyphs">Voice</text>
<rect x="3267" y="132.6" width="67.7" height="36" fill="#222222" rx="4.7" stroke="#000000" stroke-width="2.6"/>
<text x="3300.9" y="160.6" font-size="27.6" fill="#e6e6e6" stroke="#e6e6e6" stroke-width="0.66" text-anchor="middle" textLength="52.5" lengthAdjust="spacingAndGlyphs">EXT</text>
<rect x="3386.5" y="132.6" width="67.7" height="35.8" fill="#3c3c3c" stroke="#000000" stroke-width="2.6"/>
<text x="3420.4" y="160.5" font-size="28.6" fill="#e6e6e6" stroke="#e6e6e6" stroke-width="0.69" text-anchor="middle" textLength="58" lengthAdjust="spacingAndGlyphs">1.00</text>
<path d="M3336.78 259.99A36.98 36.98 0 0 1 3318.99 299.12" fill="none" stroke="#0e0e0e" stroke-width="6.25"/>
<path d="M3282.01 299.12A36.98 36.98 0 1 1 3335.4 254.88" fill="none" stroke="#5fbcd9" stroke-width="6.25"/>
<path d="M3302.39 266.44L3338.35 253.85" stroke="#0e0e0e" stroke-width="6.2"/>
<circle cx="3302.39" cy="266.44" r="3.1" fill="#0e0e0e"/>
<text x="3300.5" y="216.3" font-size="26.8" fill="#e6e6e6" stroke="#e6e6e6" stroke-width="0.85" text-anchor="middle" textLength="69.5" lengthAdjust="spacingAndGlyphs">steps</text>
<text x="3300.5" y="329" font-size="28.7" fill="#e6e6e6" stroke="#e6e6e6" stroke-width="0.7" text-anchor="middle" textLength="50.5" lengthAdjust="spacingAndGlyphs">127</text>
<path d="M3397.03 296.15A36.98 36.98 0 1 1 3438.39 299.12" fill="none" stroke="#0e0e0e" stroke-width="6.25"/>
<path d="M3418.9 268.83L3399.85 301.83" stroke="#0e0e0e" stroke-width="6.2"/>
<circle cx="3418.9" cy="268.83" r="3.1" fill="#0e0e0e"/>
<text x="3419.9" y="216.3" font-size="26.8" fill="#e6e6e6" stroke="#e6e6e6" stroke-width="0.85" text-anchor="middle" textLength="68" lengthAdjust="spacingAndGlyphs">delay</text>
<text x="3419.9" y="329" font-size="28.7" fill="#e6e6e6" stroke="#e6e6e6" stroke-width="0.7" text-anchor="middle" textLength="90.8" lengthAdjust="spacingAndGlyphs">0.00 %</text>
<path d="M3282.01 455.02A36.98 36.98 0 1 1 3337.47 423" fill="none" stroke="#0e0e0e" stroke-width="6.25"/>
<path d="M3337.1 428.28A36.98 36.98 0 0 1 3318.99 455.02" fill="none" stroke="#5fbcd9" stroke-width="6.25"/>
<path d="M3302.5 423L3340.6 423" stroke="#0e0e0e" stroke-width="6.2"/>
<circle cx="3302.5" cy="423" r="3.1" fill="#0e0e0e"/>
<text x="3300.5" y="372.2" font-size="26.8" fill="#e6e6e6" stroke="#e6e6e6" stroke-width="0.85" text-anchor="middle" textLength="45.5" lengthAdjust="spacingAndGlyphs">min</text>
<text x="3300.5" y="484.9" font-size="28.7" fill="#e6e6e6" stroke="#e6e6e6" stroke-width="0.7" text-anchor="middle" textLength="90.8" lengthAdjust="spacingAndGlyphs">80.0 %</text>
<path d="M3401.41 455.02A36.98 36.98 0 1 1 3438.39 455.02" fill="none" stroke="#5fbcd9" stroke-width="6.25"/>
<path d="M3420.9 424.73L3439.95 457.73" stroke="#0e0e0e" stroke-width="6.2"/>
<circle cx="3420.9" cy="424.73" r="3.1" fill="#0e0e0e"/>
<text x="3419.9" y="372.2" font-size="26.8" fill="#e6e6e6" stroke="#e6e6e6" stroke-width="0.85" text-anchor="middle" textLength="52" lengthAdjust="spacingAndGlyphs">max</text>
<text x="3419.9" y="484.9" font-size="28.7" fill="#e6e6e6" stroke="#e6e6e6" stroke-width="0.7" text-anchor="middle" textLength="82.5" lengthAdjust="spacingAndGlyphs">100 %</text>
<rect x="3255.5" y="515.3" width="94.4" height="36.1" fill="#1e1e1e" stroke="#000000" stroke-width="2.8"/>
<rect x="3256.9" y="516.7" width="62" height="33.3" fill="#36707f"/>
<text x="3302.6" y="543.7" font-size="29.5" fill="#e6e6e6" stroke="#e6e6e6" stroke-width="0.71" text-anchor="middle" textLength="82" lengthAdjust="spacingAndGlyphs">focus</text>
<rect x="3383.7" y="515.3" width="72.3" height="36.1" fill="#e8953a" rx="6.6" stroke="#000000" stroke-width="2.8"/>
<text x="3420" y="543.6" font-size="28.6" fill="#0a0a0a" stroke="#0a0a0a" stroke-width="0.69" text-anchor="middle" textLength="38" lengthAdjust="spacingAndGlyphs">AR</text>
<g><clipPath id="c8_591"><rect x="8" y="591.8" width="614.1" height="576.2" rx="14"/></clipPath>
<g clip-path="url(#c8_591)">
<rect x="8" y="591.8" width="614.1" height="576.2" fill="#8e8e8e"/>
<rect x="8" y="591.8" width="614.1" height="52.7" fill="#b6b2b1"/>
</g></g>
<circle cx="37.5" cy="617.8" r="18.3" fill="#f8d040" stroke="#484848" stroke-width="2.2"/>
<text x="70.6" y="628.7" font-size="29.6" fill="#0a0a0a" stroke="#0a0a0a" stroke-width="0.95" textLength="207.5" lengthAdjust="spacingAndGlyphs">PR_Pendulum</text>
<circle cx="494" cy="617.8" r="18.45" fill="#a0a0a0" stroke="#2a2a2a" stroke-width="2.6"/>
<rect x="485.3" y="611.6" width="18.4" height="12.4" fill="none" stroke="#0a0a0a" stroke-width="3.1"/>
<rect x="487.3" y="607.4" width="3.2" height="3" fill="#0a0a0a"/>
<rect x="487.3" y="625.4" width="3.2" height="3" fill="#0a0a0a"/>
<rect x="498.7" y="607.4" width="3.2" height="3" fill="#0a0a0a"/>
<rect x="498.7" y="625.4" width="3.2" height="3" fill="#0a0a0a"/>
<circle cx="543" cy="617.8" r="18.45" fill="#a0a0a0" stroke="#2a2a2a" stroke-width="2.6"/>
<g transform="translate(543 617.8)" fill="none" stroke="#0a0a0a" stroke-width="3.2"><path d="M1.5 -8.6A8.6 8.6 0 0 0 -8.4 1.5"/><path d="M-1.5 8.6A8.6 8.6 0 0 0 8.4 -1.5"/></g>
<path d="M529.4 617.3L538.8 617.3L533.8 623.4Z" fill="#0a0a0a"/>
<path d="M556.6 618.3L547.2 618.3L552.2 612.2Z" fill="#0a0a0a"/>
<circle cx="592.5" cy="617.8" r="18.45" fill="#a0a0a0" stroke="#2a2a2a" stroke-width="2.6"/>
<path d="M581.7 607.8H599.3L603.3 611.8V628.6H581.7Z" fill="#0a0a0a"/>
<rect x="587.9" y="610.6" width="9.2" height="5.4" fill="#a0a0a0"/>
<text x="21" y="683.8" font-size="23.8" fill="#0a0a0a" font-weight="bold" textLength="53.2" lengthAdjust="spacingAndGlyphs">LINK</text>
<rect x="306.2" y="650.3" width="2.6" height="511.5" fill="#5c5c5c"/>
<text x="318.5" y="683.8" font-size="23.8" fill="#0a0a0a" font-weight="bold" textLength="131.5" lengthAdjust="spacingAndGlyphs">PENDULUM</text>
<circle cx="590.6" cy="675" r="20.8" fill="#989898" stroke="#3c3c3c" stroke-width="2.4"/>
<path d="M582.9 665.2L601.4 675L582.9 684.8Z" fill="#0a0a0a"/>
<rect x="52.7" y="715.8" width="210.2" height="51.2" fill="#a0a0a0" rx="5" stroke="#0a0a0a" stroke-width="3"/>
<text x="155.2" y="757.4" font-size="47.5" fill="#0a0a0a" stroke="#0a0a0a" stroke-width="0.5" text-anchor="middle" textLength="137" lengthAdjust="spacingAndGlyphs" font-family="Liberation Mono, DejaVu Sans Mono, monospace">MAPPED</text>
<rect x="52.7" y="774.4" width="210.2" height="51.5" fill="#e26a2c" rx="5" stroke="#0a0a0a" stroke-width="3"/>
<text x="155.4" y="816" font-size="47.5" fill="#0a0a0a" stroke="#0a0a0a" stroke-width="0.5" text-anchor="middle" textLength="135" lengthAdjust="spacingAndGlyphs" font-family="Liberation Mono, DejaVu Sans Mono, monospace">UNLOCK</text>
<path d="M135.7 957.73A52 52 0 0 1 171.35 861.6" fill="none" stroke="#0a0a0a" stroke-width="6.8"/>
<path d="M176.5 862.85A52 52 0 0 1 187.7 957.73" fill="none" stroke="#0a0a0a" stroke-width="6.8"/>
<path d="M163.74 901.89L171.99 858.26" stroke="#0a0a0a" stroke-width="6.2"/>
<circle cx="163.74" cy="901.89" r="3.1" fill="#0a0a0a"/>
<text x="161.7" y="992.6" font-size="17.8" fill="#0a0a0a" text-anchor="middle" font-weight="bold" textLength="39.5" lengthAdjust="spacingAndGlyphs">1.07</text>
<text x="161.7" y="1035.8" font-size="22.3" fill="#0a0a0a" stroke="#0a0a0a" stroke-width="0.62" text-anchor="middle" textLength="166.3" lengthAdjust="spacingAndGlyphs">&quot;Stereo Width&quot;</text>
<text x="161.7" y="1072.3" font-size="22.3" fill="#0a0a0a" stroke="#0a0a0a" stroke-width="0.62" text-anchor="middle" textLength="65" lengthAdjust="spacingAndGlyphs">Utility</text>
<text x="161.7" y="1108.8" font-size="22.3" fill="#0a0a0a" stroke="#0a0a0a" stroke-width="0.62" text-anchor="middle" textLength="28.2" lengthAdjust="spacingAndGlyphs">FX</text>
<rect x="374.7" y="716.4" width="67.7" height="36" fill="#c6c6c6" rx="4.7" stroke="#0a0a0a" stroke-width="2.6"/>
<text x="408.6" y="744.4" font-size="27.6" fill="#0a0a0a" stroke="#0a0a0a" stroke-width="0.66" text-anchor="middle" textLength="52.5" lengthAdjust="spacingAndGlyphs">EXT</text>
<rect x="494.2" y="716.4" width="67.7" height="35.8" fill="#8e8e8e" stroke="#0a0a0a" stroke-width="2.6"/>
<text x="528.1" y="744.3" font-size="28.6" fill="#0a0a0a" stroke="#0a0a0a" stroke-width="0.69" text-anchor="middle" textLength="58" lengthAdjust="spacingAndGlyphs">1.00</text>
<path d="M387.11 882.92A36.98 36.98 0 1 1 424.09 882.92" fill="none" stroke="#e8702a" stroke-width="6.25"/>
<path d="M406.6 852.63L425.65 885.63" stroke="#1c1c1c" stroke-width="6.2"/>
<circle cx="406.6" cy="852.63" r="3.1" fill="#1c1c1c"/>
<text x="405.6" y="800.1" font-size="26.8" fill="#0a0a0a" stroke="#0a0a0a" stroke-width="0.85" text-anchor="middle" textLength="69.5" lengthAdjust="spacingAndGlyphs">steps</text>
<text x="405.6" y="912.8" font-size="28.7" fill="#0a0a0a" stroke="#0a0a0a" stroke-width="0.7" text-anchor="middle" textLength="68.5" lengthAdjust="spacingAndGlyphs">4095</text>
<path d="M491.17 864.62A36.98 36.98 0 1 1 543.99 882.92" fill="none" stroke="#1c1c1c" stroke-width="6.25"/>
<path d="M507.01 882.92A36.98 36.98 0 0 1 493.48 869.39" fill="none" stroke="#e8702a" stroke-width="6.25"/>
<path d="M523.77 851.9L490.77 870.95" stroke="#1c1c1c" stroke-width="6.2"/>
<circle cx="523.77" cy="851.9" r="3.1" fill="#1c1c1c"/>
<text x="525.5" y="800.1" font-size="26.8" fill="#0a0a0a" stroke="#0a0a0a" stroke-width="0.85" text-anchor="middle" textLength="68" lengthAdjust="spacingAndGlyphs">delay</text>
<text x="525.5" y="912.8" font-size="28.7" fill="#0a0a0a" stroke="#0a0a0a" stroke-width="0.7" text-anchor="middle" textLength="90.8" lengthAdjust="spacingAndGlyphs">10.0 %</text>
<path d="M387.11 1038.82A36.98 36.98 0 0 1 373.58 988.31" fill="none" stroke="#1c1c1c" stroke-width="6.25"/>
<path d="M376.55 983.93A36.98 36.98 0 1 1 424.09 1038.82" fill="none" stroke="#e8702a" stroke-width="6.25"/>
<path d="M403.87 1005.8L370.87 986.75" stroke="#1c1c1c" stroke-width="6.2"/>
<circle cx="403.87" cy="1005.8" r="3.1" fill="#1c1c1c"/>
<text x="405.6" y="956" font-size="26.8" fill="#0a0a0a" stroke="#0a0a0a" stroke-width="0.85" text-anchor="middle" textLength="45.5" lengthAdjust="spacingAndGlyphs">min</text>
<text x="405.6" y="1068.7" font-size="28.7" fill="#0a0a0a" stroke="#0a0a0a" stroke-width="0.7" text-anchor="middle" textLength="90.8" lengthAdjust="spacingAndGlyphs">30.0 %</text>
<path d="M559.83 993.08A36.98 36.98 0 0 1 543.99 1038.82" fill="none" stroke="#1c1c1c" stroke-width="6.25"/>
<path d="M507.01 1038.82A36.98 36.98 0 1 1 557.52 988.31" fill="none" stroke="#e8702a" stroke-width="6.25"/>
<path d="M527.23 1005.8L560.23 986.75" stroke="#1c1c1c" stroke-width="6.2"/>
<circle cx="527.23" cy="1005.8" r="3.1" fill="#1c1c1c"/>
<text x="525.5" y="956" font-size="26.8" fill="#0a0a0a" stroke="#0a0a0a" stroke-width="0.85" text-anchor="middle" textLength="52" lengthAdjust="spacingAndGlyphs">max</text>
<text x="525.5" y="1068.7" font-size="28.7" fill="#0a0a0a" stroke="#0a0a0a" stroke-width="0.7" text-anchor="middle" textLength="90.8" lengthAdjust="spacingAndGlyphs">70.0 %</text>
<rect x="371.9" y="1098.7" width="187" height="37.5" fill="#c6c6c6" rx="4.7" stroke="#0a0a0a" stroke-width="2.6"/>
<text x="465.4" y="1127" font-size="28.6" fill="#0a0a0a" stroke="#0a0a0a" stroke-width="0.69" text-anchor="middle" textLength="103" lengthAdjust="spacingAndGlyphs">INVERT</text>
<g><clipPath id="c630_591"><rect x="629.8" y="591.8" width="1021.3" height="576.2" rx="14"/></clipPath>
<g clip-path="url(#c630_591)">
<rect x="629.8" y="591.8" width="1021.3" height="576.2" fill="#363636"/>
<rect x="629.8" y="591.8" width="1021.3" height="52.7" fill="#484848"/>
</g></g>
<circle cx="660" cy="617.8" r="18.3" fill="#e8953f" stroke="#141414" stroke-width="2.2"/>
<text x="693.1" y="628.7" font-size="29.6" fill="#e6e6e6" stroke="#e6e6e6" stroke-width="0.95" textLength="198" lengthAdjust="spacingAndGlyphs">PR_Precision</text>
<circle cx="1522.5" cy="617.8" r="18.45" fill="#464646" stroke="#050505" stroke-width="2.6"/>
<rect x="1513.8" y="611.6" width="18.4" height="12.4" fill="none" stroke="#e6e6e6" stroke-width="3.1"/>
<rect x="1515.8" y="607.4" width="3.2" height="3" fill="#e6e6e6"/>
<rect x="1515.8" y="625.4" width="3.2" height="3" fill="#e6e6e6"/>
<rect x="1527.2" y="607.4" width="3.2" height="3" fill="#e6e6e6"/>
<rect x="1527.2" y="625.4" width="3.2" height="3" fill="#e6e6e6"/>
<circle cx="1571.5" cy="617.8" r="18.45" fill="#464646" stroke="#050505" stroke-width="2.6"/>
<g transform="translate(1571.5 617.8)" fill="none" stroke="#e6e6e6" stroke-width="3.2"><path d="M1.5 -8.6A8.6 8.6 0 0 0 -8.4 1.5"/><path d="M-1.5 8.6A8.6 8.6 0 0 0 8.4 -1.5"/></g>
<path d="M1557.9 617.3L1567.3 617.3L1562.3 623.4Z" fill="#e6e6e6"/>
<path d="M1585.1 618.3L1575.7 618.3L1580.7 612.2Z" fill="#e6e6e6"/>
<circle cx="1621" cy="617.8" r="18.45" fill="#464646" stroke="#050505" stroke-width="2.6"/>
<path d="M1610.2 607.8H1627.8L1631.8 611.8V628.6H1610.2Z" fill="#e6e6e6"/>
<rect x="1616.4" y="610.6" width="9.2" height="5.4" fill="#464646"/>
<text x="643.5" y="683.8" font-size="23.8" fill="#e6e6e6" font-weight="bold" textLength="53.2" lengthAdjust="spacingAndGlyphs">LINK</text>
<rect x="928.7" y="650.3" width="2.6" height="511.5" fill="#151515"/>
<text x="939" y="683.8" font-size="23.8" fill="#e6e6e6" font-weight="bold" textLength="126.5" lengthAdjust="spacingAndGlyphs">PRECISION</text>
<circle cx="1621.7" cy="675" r="20.8" fill="#464646" stroke="#000000" stroke-width="2.4"/>
<path d="M1614 665.2L1632.5 675L1614 684.8Z" fill="#e6e6e6"/>
<rect x="675.2" y="715.8" width="210.2" height="51.2" fill="#444444" rx="5" stroke="#e6e6e6" stroke-width="3"/>
<text x="777.7" y="757.4" font-size="47.5" fill="#e6e6e6" stroke="#e6e6e6" stroke-width="0.5" text-anchor="middle" textLength="137" lengthAdjust="spacingAndGlyphs" font-family="Liberation Mono, DejaVu Sans Mono, monospace">MAPPED</text>
<rect x="675.2" y="774.4" width="210.2" height="51.5" fill="#5fbcd9" rx="5" stroke="#e6e6e6" stroke-width="3"/>
<text x="777.9" y="816" font-size="47.5" fill="#e6e6e6" stroke="#e6e6e6" stroke-width="0.5" text-anchor="middle" textLength="135" lengthAdjust="spacingAndGlyphs" font-family="Liberation Mono, DejaVu Sans Mono, monospace">UNLOCK</text>
<path d="M758.2 957.73A52 52 0 1 1 828.25 885.07" fill="none" stroke="#e6e6e6" stroke-width="6.8"/>
<path d="M830.83 889.69A52 52 0 0 1 810.2 957.73" fill="none" stroke="#e6e6e6" stroke-width="6.8"/>
<path d="M793.52 906.85L831.13 883.26" stroke="#e6e6e6" stroke-width="6.2"/>
<circle cx="793.52" cy="906.85" r="3.1" fill="#e6e6e6"/>
<text x="784.2" y="992.6" font-size="17.8" fill="#e6e6e6" text-anchor="middle" font-weight="bold" textLength="51" lengthAdjust="spacingAndGlyphs">68.75</text>
<text x="784.2" y="1035.8" font-size="22.3" fill="#e6e6e6" stroke="#e6e6e6" stroke-width="0.62" text-anchor="middle" textLength="53.2" lengthAdjust="spacingAndGlyphs">Tone</text>
<text x="784.2" y="1072.3" font-size="22.3" fill="#e6e6e6" stroke="#e6e6e6" stroke-width="0.62" text-anchor="middle" textLength="107.5" lengthAdjust="spacingAndGlyphs">Overdrive</text>
<text x="784.2" y="1108.8" font-size="22.3" fill="#e6e6e6" stroke="#e6e6e6" stroke-width="0.62" text-anchor="middle" textLength="69.6" lengthAdjust="spacingAndGlyphs">Guitar</text>
<rect x="969.1" y="716.5" width="67.7" height="36" fill="#222222" rx="4.7" stroke="#000000" stroke-width="2.6"/>
<text x="1003" y="744.5" font-size="27.6" fill="#e6e6e6" stroke="#e6e6e6" stroke-width="0.66" text-anchor="middle" textLength="52.5" lengthAdjust="spacingAndGlyphs">EXT</text>
<rect x="969.1" y="762.5" width="67.7" height="35.8" fill="#3c3c3c" stroke="#000000" stroke-width="2.6"/>
<text x="1003" y="790.4" font-size="28.6" fill="#e6e6e6" stroke="#e6e6e6" stroke-width="0.69" text-anchor="middle" textLength="58" lengthAdjust="spacingAndGlyphs">1.00</text>
<text x="1118.2" y="842.3" font-size="24" fill="#e6e6e6" stroke="#e6e6e6" stroke-width="0.58" textLength="16.4" lengthAdjust="spacingAndGlyphs">A</text>
<rect x="1150.5" y="815.7" width="35.1" height="34" fill="#e8953a" rx="5.7" stroke="#000000" stroke-width="2.6"/>
<text x="1118.6" y="891.4" font-size="24" fill="#e6e6e6" stroke="#e6e6e6" stroke-width="0.58" textLength="16.3" lengthAdjust="spacingAndGlyphs">R</text>
<circle cx="1168.1" cy="881.6" r="18.2" fill="#333333" stroke="#000000" stroke-width="2.6"/>
<path d="M1342.39 831.48A52 52 0 0 1 1317.8 888.53" fill="none" stroke="#0e0e0e" stroke-width="6.8"/>
<path d="M1265.8 888.53A52 52 0 1 1 1340.91 826.4" fill="none" stroke="#e8953a" stroke-width="6.8"/>
<path d="M1301.24 840.21L1344.12 825.28" stroke="#0e0e0e" stroke-width="6.2"/>
<circle cx="1301.24" cy="840.21" r="3.1" fill="#0e0e0e"/>
<text x="1291.8" y="776.2" font-size="26.8" fill="#e6e6e6" stroke="#e6e6e6" stroke-width="0.85" text-anchor="middle" textLength="69.5" lengthAdjust="spacingAndGlyphs">steps</text>
<text x="1291.8" y="932.2" font-size="28.7" fill="#e6e6e6" stroke="#e6e6e6" stroke-width="0.7" text-anchor="middle" textLength="34.8" lengthAdjust="spacingAndGlyphs">12</text>
<path d="M1408.63 879.35A36.98 36.98 0 1 1 1449.99 882.32" fill="none" stroke="#0e0e0e" stroke-width="6.25"/>
<path d="M1430.5 852.03L1411.45 885.03" stroke="#0e0e0e" stroke-width="6.2"/>
<circle cx="1430.5" cy="852.03" r="3.1" fill="#0e0e0e"/>
<text x="1431.5" y="799.5" font-size="26.8" fill="#e6e6e6" stroke="#e6e6e6" stroke-width="0.85" text-anchor="middle" textLength="68" lengthAdjust="spacingAndGlyphs">delay</text>
<text x="1431.5" y="912.8" font-size="28.7" fill="#e6e6e6" stroke="#e6e6e6" stroke-width="0.7" text-anchor="middle" textLength="90.8" lengthAdjust="spacingAndGlyphs">0.00 %</text>
<rect x="981.2" y="957.8" width="26.4" height="27.4" fill="#e8953a" rx="4.7" stroke="#0c0c0c" stroke-width="2.6"/>
<rect x="1018.26" y="957.8" width="26.4" height="27.4" fill="#333333" rx="4.7" stroke="#0c0c0c" stroke-width="2.6"/>
<rect x="1055.32" y="957.8" width="26.4" height="27.4" fill="#333333" rx="4.7" stroke="#0c0c0c" stroke-width="2.6"/>
<rect x="1092.38" y="957.8" width="26.4" height="27.4" fill="#e8953a" rx="4.7" stroke="#0c0c0c" stroke-width="2.6"/>
<rect x="1129.44" y="957.8" width="26.4" height="27.4" fill="#333333" rx="4.7" stroke="#0c0c0c" stroke-width="2.6"/>
<rect x="1166.5" y="957.8" width="26.4" height="27.4" fill="#e8953a" rx="4.7" stroke="#0c0c0c" stroke-width="2.6"/>
<rect x="1203.56" y="957.8" width="26.4" height="27.4" fill="#e8953a" rx="4.7" stroke="#0c0c0c" stroke-width="2.6"/>
<rect x="1240.62" y="957.8" width="26.4" height="27.4" fill="#333333" rx="4.7" stroke="#0c0c0c" stroke-width="2.6"/>
<rect x="1277.68" y="957.8" width="26.4" height="27.4" fill="#333333" rx="4.7" stroke="#0c0c0c" stroke-width="2.6"/>
<rect x="1314.74" y="957.8" width="26.4" height="27.4" fill="#e8953a" rx="4.7" stroke="#0c0c0c" stroke-width="2.6"/>
<rect x="1351.8" y="957.8" width="26.4" height="27.4" fill="#333333" rx="4.7" stroke="#0c0c0c" stroke-width="2.6"/>
<rect x="1388.86" y="957.8" width="26.4" height="27.4" fill="#e8953a" rx="4.7" stroke="#0c0c0c" stroke-width="2.6"/>
<rect x="1425.92" y="957.8" width="26.4" height="27.4" fill="#333333" rx="4.7" stroke="#0c0c0c" stroke-width="2.6"/>
<rect x="1462.98" y="957.8" width="26.4" height="27.4" fill="#e8953a" rx="4.7" stroke="#0c0c0c" stroke-width="2.6"/>
<rect x="1500.04" y="957.8" width="26.4" height="27.4" fill="#e8953a" rx="4.7" stroke="#0c0c0c" stroke-width="2.6"/>
<rect x="1537.1" y="957.8" width="26.4" height="27.4" fill="#333333" rx="4.7" stroke="#0c0c0c" stroke-width="2.6"/>
<rect x="1574.16" y="957.8" width="26.4" height="27.4" fill="#e8953a" rx="4.7" stroke="#0c0c0c" stroke-width="2.6"/>
<text x="992.5" y="1008" font-size="20.8" fill="#e6e6e6" stroke="#e6e6e6" stroke-width="0.3" text-anchor="middle">0</text>
<text x="1180" y="1008" font-size="20.8" fill="#e6e6e6" stroke="#e6e6e6" stroke-width="0.3" text-anchor="middle">5</text>
<text x="1364" y="1008" font-size="20.8" fill="#e6e6e6" stroke="#e6e6e6" stroke-width="0.3" text-anchor="middle">10</text>
<text x="1551" y="1008" font-size="20.8" fill="#e6e6e6" stroke="#e6e6e6" stroke-width="0.3" text-anchor="middle">15</text>
<rect x="1091.6" y="1042.6" width="126.4" height="39" fill="#222222" rx="5.7" stroke="#e0e0e0" stroke-width="2.6"/>
<text x="1154.8" y="1072.3" font-size="26.6" fill="#e6e6e6" stroke="#e6e6e6" stroke-width="0.64" text-anchor="middle" textLength="108" lengthAdjust="spacingAndGlyphs">CLASSIC</text>
<rect x="1227.3" y="1042.6" width="127.1" height="39" fill="#222222" rx="5.7" stroke="#e0e0e0" stroke-width="2.6"/>
<text x="1290.85" y="1072.3" font-size="26.6" fill="#e6e6e6" stroke="#e6e6e6" stroke-width="0.64" text-anchor="middle" textLength="114" lengthAdjust="spacingAndGlyphs">P-SERIES</text>
<rect x="1363.6" y="1042.6" width="127.1" height="39" fill="#e8953a" rx="5.7" stroke="#e0e0e0" stroke-width="2.6"/>
<text x="1427.15" y="1072.3" font-size="26.6" fill="#0a0a0a" stroke="#0a0a0a" stroke-width="0.64" text-anchor="middle" textLength="35" lengthAdjust="spacingAndGlyphs">AR</text>
<g><clipPath id="c1659_591"><rect x="1658.9" y="591.8" width="611.9" height="576.2" rx="14"/></clipPath>
<g clip-path="url(#c1659_591)">
<rect x="1658.9" y="591.8" width="611.9" height="576.2" fill="#8f8f8f"/>
<rect x="1658.9" y="591.8" width="611.9" height="52.7" fill="#a9a9a9"/>
</g></g>
<circle cx="1688.7" cy="617.8" r="18.3" fill="#f4b041" stroke="#484848" stroke-width="2.2"/>
<text x="1721.8" y="628.7" font-size="29.6" fill="#0a0a0a" stroke="#0a0a0a" stroke-width="0.95" textLength="286" lengthAdjust="spacingAndGlyphs">PR_ClassicRandom</text>
<circle cx="2143" cy="617.8" r="18.45" fill="#b4b4b4" stroke="#222222" stroke-width="2.6"/>
<rect x="2134.3" y="611.6" width="18.4" height="12.4" fill="none" stroke="#0a0a0a" stroke-width="3.1"/>
<rect x="2136.3" y="607.4" width="3.2" height="3" fill="#0a0a0a"/>
<rect x="2136.3" y="625.4" width="3.2" height="3" fill="#0a0a0a"/>
<rect x="2147.7" y="607.4" width="3.2" height="3" fill="#0a0a0a"/>
<rect x="2147.7" y="625.4" width="3.2" height="3" fill="#0a0a0a"/>
<circle cx="2192" cy="617.8" r="18.45" fill="#b4b4b4" stroke="#222222" stroke-width="2.6"/>
<g transform="translate(2192 617.8)" fill="none" stroke="#0a0a0a" stroke-width="3.2"><path d="M1.5 -8.6A8.6 8.6 0 0 0 -8.4 1.5"/><path d="M-1.5 8.6A8.6 8.6 0 0 0 8.4 -1.5"/></g>
<path d="M2178.4 617.3L2187.8 617.3L2182.8 623.4Z" fill="#0a0a0a"/>
<path d="M2205.6 618.3L2196.2 618.3L2201.2 612.2Z" fill="#0a0a0a"/>
<circle cx="2241.5" cy="617.8" r="18.45" fill="#b4b4b4" stroke="#222222" stroke-width="2.6"/>
<path d="M2230.7 607.8H2248.3L2252.3 611.8V628.6H2230.7Z" fill="#0a0a0a"/>
<rect x="2236.9" y="610.6" width="9.2" height="5.4" fill="#b4b4b4"/>
<text x="1672.2" y="683.8" font-size="23.8" fill="#0a0a0a" font-weight="bold" textLength="53.2" lengthAdjust="spacingAndGlyphs">LINK</text>
<rect x="1959.7" y="650.3" width="2.6" height="511.5" fill="#555555"/>
<text x="1972" y="683.8" font-size="23.8" fill="#0a0a0a" font-weight="bold" textLength="97.5" lengthAdjust="spacingAndGlyphs">CLASSIC</text>
<circle cx="2241.8" cy="675" r="20.8" fill="#bababa" stroke="#4a4a4a" stroke-width="2.4"/>
<path d="M2234.1 665.2L2252.6 675L2234.1 684.8Z" fill="#0a0a0a"/>
<rect x="1706.2" y="715.8" width="210.2" height="51.2" fill="#bdbdbd" rx="5" stroke="#0a0a0a" stroke-width="3"/>
<text x="1808.7" y="757.4" font-size="47.5" fill="#0a0a0a" stroke="#0a0a0a" stroke-width="0.5" text-anchor="middle" textLength="137" lengthAdjust="spacingAndGlyphs" font-family="Liberation Mono, DejaVu Sans Mono, monospace">MAPPED</text>
<rect x="1706.2" y="774.4" width="210.2" height="51.5" fill="#82dcf4" rx="5" stroke="#0a0a0a" stroke-width="3"/>
<text x="1808.9" y="816" font-size="47.5" fill="#0a0a0a" stroke="#0a0a0a" stroke-width="0.5" text-anchor="middle" textLength="135" lengthAdjust="spacingAndGlyphs" font-family="Liberation Mono, DejaVu Sans Mono, monospace">UNLOCK</text>
<path d="M1789.2 957.73A52 52 0 0 1 1783.19 871.72" fill="none" stroke="#0a0a0a" stroke-width="6.8"/>
<path d="M1787.52 868.68A52 52 0 1 1 1841.2 957.73" fill="none" stroke="#0a0a0a" stroke-width="6.8"/>
<path d="M1808.43 904.03L1781.09 869.04" stroke="#0a0a0a" stroke-width="6.2"/>
<circle cx="1808.43" cy="904.03" r="3.1" fill="#0a0a0a"/>
<text x="1815.2" y="992.6" font-size="17.8" fill="#0a0a0a" text-anchor="middle" font-weight="bold" textLength="51" lengthAdjust="spacingAndGlyphs">-9.36</text>
<text x="1815.2" y="1035.8" font-size="22.3" fill="#0a0a0a" stroke="#0a0a0a" stroke-width="0.62" text-anchor="middle" textLength="56.7" lengthAdjust="spacingAndGlyphs">Drive</text>
<text x="1815.2" y="1072.3" font-size="22.3" fill="#0a0a0a" stroke="#0a0a0a" stroke-width="0.62" text-anchor="middle" textLength="105.1" lengthAdjust="spacingAndGlyphs">Saturator</text>
<text x="1815.2" y="1108.8" font-size="22.3" fill="#0a0a0a" stroke="#0a0a0a" stroke-width="0.62" text-anchor="middle" textLength="71.5" lengthAdjust="spacingAndGlyphs">Drums</text>
<rect x="2025" y="716.4" width="67.7" height="36" fill="#f4b041" rx="4.7" stroke="#0a0a0a" stroke-width="2.6"/>
<text x="2058.9" y="744.4" font-size="27.6" fill="#0a0a0a" stroke="#0a0a0a" stroke-width="0.66" text-anchor="middle" textLength="52.5" lengthAdjust="spacingAndGlyphs">EXT</text>
<rect x="2144.5" y="716.4" width="67.7" height="35.8" fill="#dcdcdc" stroke="#0a0a0a" stroke-width="2.6"/>
<rect x="2145.8" y="717.7" width="31.25" height="33.2" fill="#82dcf4"/>
<text x="2178.4" y="744.3" font-size="28.6" fill="#0a0a0a" stroke="#0a0a0a" stroke-width="0.69" text-anchor="middle" textLength="58" lengthAdjust="spacingAndGlyphs">1.50</text>
<path d="M2094 856.18A36.98 36.98 0 0 1 2075.89 882.92" fill="none" stroke="#222222" stroke-width="6.25"/>
<path d="M2038.91 882.92A36.98 36.98 0 1 1 2094.38 850.9" fill="none" stroke="#82dcf4" stroke-width="6.25"/>
<path d="M2059.4 850.9L2097.5 850.9" stroke="#222222" stroke-width="6.2"/>
<circle cx="2059.4" cy="850.9" r="3.1" fill="#222222"/>
<text x="2057.4" y="800.1" font-size="26.8" fill="#0a0a0a" stroke="#0a0a0a" stroke-width="0.85" text-anchor="middle" textLength="69.5" lengthAdjust="spacingAndGlyphs">steps</text>
<text x="2057.4" y="912.8" font-size="28.7" fill="#0a0a0a" stroke="#0a0a0a" stroke-width="0.7" text-anchor="middle" textLength="50.5" lengthAdjust="spacingAndGlyphs">100</text>
<path d="M2154.43 879.95A36.98 36.98 0 1 1 2195.79 882.92" fill="none" stroke="#222222" stroke-width="6.25"/>
<path d="M2176.3 852.63L2157.25 885.63" stroke="#222222" stroke-width="6.2"/>
<circle cx="2176.3" cy="852.63" r="3.1" fill="#222222"/>
<text x="2177.3" y="800.1" font-size="26.8" fill="#0a0a0a" stroke="#0a0a0a" stroke-width="0.85" text-anchor="middle" textLength="68" lengthAdjust="spacingAndGlyphs">delay</text>
<text x="2177.3" y="912.8" font-size="28.7" fill="#0a0a0a" stroke="#0a0a0a" stroke-width="0.7" text-anchor="middle" textLength="90.8" lengthAdjust="spacingAndGlyphs">0.00 %</text>
<path d="M2038.91 1038.82A36.98 36.98 0 0 1 2021.68 997.23" fill="none" stroke="#222222" stroke-width="6.25"/>
<path d="M2023.42 992.23A36.98 36.98 0 1 1 2075.89 1038.82" fill="none" stroke="#82dcf4" stroke-width="6.25"/>
<path d="M2055.47 1006.28L2018.67 996.42" stroke="#222222" stroke-width="6.2"/>
<circle cx="2055.47" cy="1006.28" r="3.1" fill="#222222"/>
<text x="2057.4" y="956" font-size="26.8" fill="#0a0a0a" stroke="#0a0a0a" stroke-width="0.85" text-anchor="middle" textLength="45.5" lengthAdjust="spacingAndGlyphs">min</text>
<text x="2057.4" y="1068.7" font-size="28.7" fill="#0a0a0a" stroke="#0a0a0a" stroke-width="0.7" text-anchor="middle" textLength="90.8" lengthAdjust="spacingAndGlyphs">25.0 %</text>
<path d="M2214.02 1002.43A36.98 36.98 0 0 1 2195.79 1038.82" fill="none" stroke="#222222" stroke-width="6.25"/>
<path d="M2158.81 1038.82A36.98 36.98 0 1 1 2213.02 997.23" fill="none" stroke="#82dcf4" stroke-width="6.25"/>
<path d="M2179.23 1006.28L2216.03 996.42" stroke="#222222" stroke-width="6.2"/>
<circle cx="2179.23" cy="1006.28" r="3.1" fill="#222222"/>
<text x="2177.3" y="956" font-size="26.8" fill="#0a0a0a" stroke="#0a0a0a" stroke-width="0.85" text-anchor="middle" textLength="52" lengthAdjust="spacingAndGlyphs">max</text>
<text x="2177.3" y="1068.7" font-size="28.7" fill="#0a0a0a" stroke="#0a0a0a" stroke-width="0.7" text-anchor="middle" textLength="90.8" lengthAdjust="spacingAndGlyphs">75.0 %</text>
<rect x="2025.7" y="1098.7" width="186.2" height="37.5" fill="#dcdcdc" rx="4.7" stroke="#0a0a0a" stroke-width="2.6"/>
<text x="2118.8" y="1127" font-size="28.6" fill="#0a0a0a" stroke="#0a0a0a" stroke-width="0.69" text-anchor="middle" textLength="103" lengthAdjust="spacingAndGlyphs">INVERT</text>
<g><clipPath id="c2280_591"><rect x="2279.9" y="591.8" width="613.3" height="576.2" rx="14"/></clipPath>
<g clip-path="url(#c2280_591)">
<rect x="2279.9" y="591.8" width="613.3" height="576.2" fill="#4f4f4f"/>
<rect x="2279.9" y="591.8" width="613.3" height="52.7" fill="#656565"/>
</g></g>
<circle cx="2308.8" cy="617.8" r="18.3" fill="#e8953f" stroke="#141414" stroke-width="2.2"/>
<text x="2341.9" y="628.7" font-size="29.6" fill="#e6e6e6" stroke="#e6e6e6" stroke-width="0.95" textLength="204" lengthAdjust="spacingAndGlyphs">PR_Fibonacci</text>
<circle cx="2765.5" cy="617.8" r="18.45" fill="#3b3b3b" stroke="#151515" stroke-width="2.6"/>
<rect x="2756.8" y="611.6" width="18.4" height="12.4" fill="none" stroke="#e6e6e6" stroke-width="3.1"/>
<rect x="2758.8" y="607.4" width="3.2" height="3" fill="#e6e6e6"/>
<rect x="2758.8" y="625.4" width="3.2" height="3" fill="#e6e6e6"/>
<rect x="2770.2" y="607.4" width="3.2" height="3" fill="#e6e6e6"/>
<rect x="2770.2" y="625.4" width="3.2" height="3" fill="#e6e6e6"/>
<circle cx="2814.5" cy="617.8" r="18.45" fill="#3b3b3b" stroke="#151515" stroke-width="2.6"/>
<g transform="translate(2814.5 617.8)" fill="none" stroke="#e6e6e6" stroke-width="3.2"><path d="M1.5 -8.6A8.6 8.6 0 0 0 -8.4 1.5"/><path d="M-1.5 8.6A8.6 8.6 0 0 0 8.4 -1.5"/></g>
<path d="M2800.9 617.3L2810.3 617.3L2805.3 623.4Z" fill="#e6e6e6"/>
<path d="M2828.1 618.3L2818.7 618.3L2823.7 612.2Z" fill="#e6e6e6"/>
<circle cx="2864" cy="617.8" r="18.45" fill="#3b3b3b" stroke="#151515" stroke-width="2.6"/>
<path d="M2853.2 607.8H2870.8L2874.8 611.8V628.6H2853.2Z" fill="#e6e6e6"/>
<rect x="2859.4" y="610.6" width="9.2" height="5.4" fill="#3b3b3b"/>
<text x="2292.3" y="683.8" font-size="23.8" fill="#e6e6e6" font-weight="bold" textLength="53.2" lengthAdjust="spacingAndGlyphs">LINK</text>
<rect x="2581" y="650.3" width="2.6" height="511.5" fill="#2b2b2b"/>
<text x="2593.3" y="683.8" font-size="23.8" fill="#e6e6e6" font-weight="bold" textLength="128.5" lengthAdjust="spacingAndGlyphs">FIBONACCI</text>
<circle cx="2863.1" cy="675" r="20.8" fill="#3b3b3b" stroke="#111111" stroke-width="2.4"/>
<path d="M2855.4 665.2L2873.9 675L2855.4 684.8Z" fill="#e6e6e6"/>
<rect x="2327.5" y="715.8" width="210.2" height="51.2" fill="#3b3b3b" rx="5" stroke="#e6e6e6" stroke-width="3"/>
<text x="2430" y="757.4" font-size="47.5" fill="#e6e6e6" stroke="#e6e6e6" stroke-width="0.5" text-anchor="middle" textLength="137" lengthAdjust="spacingAndGlyphs" font-family="Liberation Mono, DejaVu Sans Mono, monospace">MAPPED</text>
<rect x="2327.5" y="774.4" width="210.2" height="51.5" fill="#5fbcd9" rx="5" stroke="#e6e6e6" stroke-width="3"/>
<text x="2430.2" y="816" font-size="47.5" fill="#e6e6e6" stroke="#e6e6e6" stroke-width="0.5" text-anchor="middle" textLength="135" lengthAdjust="spacingAndGlyphs" font-family="Liberation Mono, DejaVu Sans Mono, monospace">UNLOCK</text>
<path d="M2410.5 957.73A52 52 0 1 1 2488.11 906.36" fill="none" stroke="#e6e6e6" stroke-width="6.8"/>
<path d="M2488.49 911.65A52 52 0 0 1 2462.5 957.73" fill="none" stroke="#e6e6e6" stroke-width="6.8"/>
<path d="M2447.42 911.36L2491.49 905.95" stroke="#e6e6e6" stroke-width="6.2"/>
<circle cx="2447.42" cy="911.36" r="3.1" fill="#e6e6e6"/>
<text x="2436.5" y="992.6" font-size="17.8" fill="#e6e6e6" text-anchor="middle" font-weight="bold" textLength="62" lengthAdjust="spacingAndGlyphs">109.12</text>
<text x="2436.5" y="1035.8" font-size="22.3" fill="#e6e6e6" stroke="#e6e6e6" stroke-width="0.62" text-anchor="middle" textLength="115.2" lengthAdjust="spacingAndGlyphs">Frequency</text>
<text x="2436.5" y="1072.3" font-size="22.3" fill="#e6e6e6" stroke="#e6e6e6" stroke-width="0.62" text-anchor="middle" textLength="137.3" lengthAdjust="spacingAndGlyphs">&quot;Auto Filter&quot;</text>
<text x="2436.5" y="1108.8" font-size="22.3" fill="#e6e6e6" stroke="#e6e6e6" stroke-width="0.62" text-anchor="middle" textLength="78.8" lengthAdjust="spacingAndGlyphs">Strings</text>
<rect x="2646.3" y="716.4" width="67.7" height="36" fill="#3b3b3b" rx="4.7" stroke="#111111" stroke-width="2.6"/>
<text x="2680.2" y="744.4" font-size="27.6" fill="#e6e6e6" stroke="#e6e6e6" stroke-width="0.66" text-anchor="middle" textLength="52.5" lengthAdjust="spacingAndGlyphs">EXT</text>
<rect x="2765.8" y="716.4" width="67.7" height="35.8" fill="#545454" stroke="#111111" stroke-width="2.6"/>
<text x="2799.7" y="744.3" font-size="28.6" fill="#e6e6e6" stroke="#e6e6e6" stroke-width="0.69" text-anchor="middle" textLength="58" lengthAdjust="spacingAndGlyphs">1.00</text>
<path d="M2685.08 814.3A36.98 36.98 0 0 1 2698.29 882.92" fill="none" stroke="#181818" stroke-width="6.25"/>
<path d="M2661.31 882.92A36.98 36.98 0 0 1 2679.8 813.92" fill="none" stroke="#5fbcd9" stroke-width="6.25"/>
<path d="M2679.8 848.9L2679.8 810.8" stroke="#181818" stroke-width="6.2"/>
<circle cx="2679.8" cy="848.9" r="3.1" fill="#181818"/>
<text x="2679.8" y="800.1" font-size="26.8" fill="#e6e6e6" stroke="#e6e6e6" stroke-width="0.85" text-anchor="middle" textLength="72" lengthAdjust="spacingAndGlyphs">width</text>
<text x="2679.8" y="912.8" font-size="28.7" fill="#e6e6e6" stroke="#e6e6e6" stroke-width="0.7" text-anchor="middle" textLength="82.5" lengthAdjust="spacingAndGlyphs">100 %</text>
<path d="M2804.48 814.3A36.98 36.98 0 0 1 2817.69 882.92" fill="none" stroke="#181818" stroke-width="6.25"/>
<path d="M2780.71 882.92A36.98 36.98 0 0 1 2799.2 813.92" fill="none" stroke="#5fbcd9" stroke-width="6.25"/>
<path d="M2799.2 848.9L2799.2 810.8" stroke="#181818" stroke-width="6.2"/>
<circle cx="2799.2" cy="848.9" r="3.1" fill="#181818"/>
<text x="2799.2" y="800.1" font-size="26.8" fill="#e6e6e6" stroke="#e6e6e6" stroke-width="0.85" text-anchor="middle" textLength="68" lengthAdjust="spacingAndGlyphs">delay</text>
<text x="2799.2" y="912.8" font-size="28.7" fill="#e6e6e6" stroke="#e6e6e6" stroke-width="0.7" text-anchor="middle" textLength="90.8" lengthAdjust="spacingAndGlyphs">50.0 %</text>
<path d="M2656.93 1035.85A36.98 36.98 0 1 1 2698.29 1038.82" fill="none" stroke="#5fbcd9" stroke-width="6.25"/>
<path d="M2678.8 1008.53L2659.75 1041.53" stroke="#181818" stroke-width="6.2"/>
<circle cx="2678.8" cy="1008.53" r="3.1" fill="#181818"/>
<text x="2679.8" y="956" font-size="26.8" fill="#e6e6e6" stroke="#e6e6e6" stroke-width="0.85" text-anchor="middle" textLength="45.5" lengthAdjust="spacingAndGlyphs">min</text>
<text x="2679.8" y="1068.7" font-size="28.7" fill="#e6e6e6" stroke="#e6e6e6" stroke-width="0.7" text-anchor="middle" textLength="90.8" lengthAdjust="spacingAndGlyphs">0.00 %</text>
<path d="M2780.71 1038.82A36.98 36.98 0 1 1 2817.69 1038.82" fill="none" stroke="#5fbcd9" stroke-width="6.25"/>
<path d="M2800.2 1008.53L2819.25 1041.53" stroke="#181818" stroke-width="6.2"/>
<circle cx="2800.2" cy="1008.53" r="3.1" fill="#181818"/>
<text x="2799.2" y="956" font-size="26.8" fill="#e6e6e6" stroke="#e6e6e6" stroke-width="0.85" text-anchor="middle" textLength="52" lengthAdjust="spacingAndGlyphs">max</text>
<text x="2799.2" y="1068.7" font-size="28.7" fill="#e6e6e6" stroke="#e6e6e6" stroke-width="0.7" text-anchor="middle" textLength="82.5" lengthAdjust="spacingAndGlyphs">100 %</text>
<g><clipPath id="c2901_591"><rect x="2901.2" y="591.8" width="612.4" height="576.2" rx="14"/></clipPath>
<g clip-path="url(#c2901_591)">
<rect x="2901.2" y="591.8" width="612.4" height="576.2" fill="#c7c7c7"/>
<rect x="2901.2" y="591.8" width="612.4" height="52.7" fill="#e4e4e4"/>
</g></g>
<circle cx="2930.7" cy="617.8" r="18.3" fill="#f4b041" stroke="#484848" stroke-width="2.2"/>
<text x="2963.8" y="628.7" font-size="29.6" fill="#0a0a0a" stroke="#0a0a0a" stroke-width="0.95" textLength="262" lengthAdjust="spacingAndGlyphs">PR_PseudoSeries</text>
<circle cx="3386.2" cy="617.8" r="18.45" fill="#d2d2d2" stroke="#454545" stroke-width="2.6"/>
<rect x="3377.5" y="611.6" width="18.4" height="12.4" fill="none" stroke="#0a0a0a" stroke-width="3.1"/>
<rect x="3379.5" y="607.4" width="3.2" height="3" fill="#0a0a0a"/>
<rect x="3379.5" y="625.4" width="3.2" height="3" fill="#0a0a0a"/>
<rect x="3390.9" y="607.4" width="3.2" height="3" fill="#0a0a0a"/>
<rect x="3390.9" y="625.4" width="3.2" height="3" fill="#0a0a0a"/>
<circle cx="3435.2" cy="617.8" r="18.45" fill="#d2d2d2" stroke="#454545" stroke-width="2.6"/>
<g transform="translate(3435.2 617.8)" fill="none" stroke="#0a0a0a" stroke-width="3.2"><path d="M1.5 -8.6A8.6 8.6 0 0 0 -8.4 1.5"/><path d="M-1.5 8.6A8.6 8.6 0 0 0 8.4 -1.5"/></g>
<path d="M3421.6 617.3L3431 617.3L3426 623.4Z" fill="#0a0a0a"/>
<path d="M3448.8 618.3L3439.4 618.3L3444.4 612.2Z" fill="#0a0a0a"/>
<circle cx="3484.7" cy="617.8" r="18.45" fill="#d2d2d2" stroke="#454545" stroke-width="2.6"/>
<path d="M3473.9 607.8H3491.5L3495.5 611.8V628.6H3473.9Z" fill="#0a0a0a"/>
<rect x="3480.1" y="610.6" width="9.2" height="5.4" fill="#d2d2d2"/>
<text x="2914.2" y="683.8" font-size="23.8" fill="#0a0a0a" font-weight="bold" textLength="53.2" lengthAdjust="spacingAndGlyphs">LINK</text>
<rect x="3201.7" y="650.3" width="2.6" height="511.5" fill="#8a8a8a"/>
<text x="3214" y="683.8" font-size="23.8" fill="#0a0a0a" font-weight="bold" textLength="185.5" lengthAdjust="spacingAndGlyphs">PSEUDO-SERIES</text>
<circle cx="3483.8" cy="675" r="20.8" fill="#d4d4d4" stroke="#4a4a4a" stroke-width="2.4"/>
<path d="M3476.1 665.2L3494.6 675L3476.1 684.8Z" fill="#0a0a0a"/>
<rect x="2948.2" y="715.8" width="210.2" height="51.2" fill="#d6d6d6" rx="5" stroke="#0a0a0a" stroke-width="3"/>
<text x="3050.7" y="757.4" font-size="47.5" fill="#0a0a0a" stroke="#0a0a0a" stroke-width="0.5" text-anchor="middle" textLength="137" lengthAdjust="spacingAndGlyphs" font-family="Liberation Mono, DejaVu Sans Mono, monospace">MAPPED</text>
<rect x="2948.2" y="774.4" width="210.2" height="51.5" fill="#6bbff9" rx="5" stroke="#0a0a0a" stroke-width="3"/>
<text x="3050.9" y="816" font-size="47.5" fill="#0a0a0a" stroke="#0a0a0a" stroke-width="0.5" text-anchor="middle" textLength="135" lengthAdjust="spacingAndGlyphs" font-family="Liberation Mono, DejaVu Sans Mono, monospace">UNLOCK</text>
<path d="M3031.2 957.73A52 52 0 0 1 3018.25 947.16" fill="none" stroke="#0a0a0a" stroke-width="6.8"/>
<path d="M3014.95 943.01A52 52 0 1 1 3083.2 957.73" fill="none" stroke="#0a0a0a" stroke-width="6.8"/>
<path d="M3048.96 919.99L3015.71 949.41" stroke="#0a0a0a" stroke-width="6.2"/>
<circle cx="3048.96" cy="919.99" r="3.1" fill="#0a0a0a"/>
<text x="3057.2" y="992.6" font-size="17.8" fill="#0a0a0a" text-anchor="middle" font-weight="bold" textLength="39.5" lengthAdjust="spacingAndGlyphs">0.06</text>
<text x="3057.2" y="1035.8" font-size="22.3" fill="#0a0a0a" stroke="#0a0a0a" stroke-width="0.62" text-anchor="middle" textLength="95.9" lengthAdjust="spacingAndGlyphs">Dry/Wet</text>
<text x="3057.2" y="1072.3" font-size="22.3" fill="#0a0a0a" stroke="#0a0a0a" stroke-width="0.62" text-anchor="middle" textLength="76.1" lengthAdjust="spacingAndGlyphs">Reverb</text>
<text x="3057.2" y="1108.8" font-size="22.3" fill="#0a0a0a" stroke="#0a0a0a" stroke-width="0.62" text-anchor="middle" textLength="60.4" lengthAdjust="spacingAndGlyphs">Piano</text>
<rect x="3267" y="716.4" width="67.7" height="36" fill="#ffffff" rx="4.7" stroke="#0a0a0a" stroke-width="2.6"/>
<text x="3300.9" y="744.4" font-size="27.6" fill="#0a0a0a" stroke="#0a0a0a" stroke-width="0.66" text-anchor="middle" textLength="52.5" lengthAdjust="spacingAndGlyphs">EXT</text>
<rect x="3386.5" y="716.4" width="67.7" height="35.8" fill="#c7c7c7" stroke="#0a0a0a" stroke-width="2.6"/>
<text x="3420.4" y="744.3" font-size="28.6" fill="#0a0a0a" stroke="#0a0a0a" stroke-width="0.69" text-anchor="middle" textLength="58" lengthAdjust="spacingAndGlyphs">1.00</text>
<path d="M3329.55 873.77A36.98 36.98 0 0 1 3318.99 882.92" fill="none" stroke="#4a4a4a" stroke-width="6.25"/>
<path d="M3282.01 882.92A36.98 36.98 0 1 1 3332.52 869.39" fill="none" stroke="#6bbff9" stroke-width="6.25"/>
<path d="M3302.23 851.9L3335.23 870.95" stroke="#4a4a4a" stroke-width="6.2"/>
<circle cx="3302.23" cy="851.9" r="3.1" fill="#4a4a4a"/>
<text x="3300.5" y="800.1" font-size="26.8" fill="#0a0a0a" stroke="#0a0a0a" stroke-width="0.85" text-anchor="middle" textLength="69.5" lengthAdjust="spacingAndGlyphs">steps</text>
<text x="3300.5" y="912.8" font-size="28.7" fill="#0a0a0a" stroke="#0a0a0a" stroke-width="0.7" text-anchor="middle" textLength="50.5" lengthAdjust="spacingAndGlyphs">255</text>
<path d="M3383.18 855.27A36.98 36.98 0 1 1 3438.39 882.92" fill="none" stroke="#4a4a4a" stroke-width="6.25"/>
<path d="M3401.41 882.92A36.98 36.98 0 0 1 3384.18 860.47" fill="none" stroke="#6bbff9" stroke-width="6.25"/>
<path d="M3417.97 851.42L3381.17 861.28" stroke="#4a4a4a" stroke-width="6.2"/>
<circle cx="3417.97" cy="851.42" r="3.1" fill="#4a4a4a"/>
<text x="3419.9" y="800.1" font-size="26.8" fill="#0a0a0a" stroke="#0a0a0a" stroke-width="0.85" text-anchor="middle" textLength="68" lengthAdjust="spacingAndGlyphs">delay</text>
<text x="3419.9" y="912.8" font-size="28.7" fill="#0a0a0a" stroke="#0a0a0a" stroke-width="0.7" text-anchor="middle" textLength="90.8" lengthAdjust="spacingAndGlyphs">15.0 %</text>
<path d="M3277.63 1035.85A36.98 36.98 0 1 1 3318.99 1038.82" fill="none" stroke="#6bbff9" stroke-width="6.25"/>
<path d="M3299.5 1008.53L3280.45 1041.53" stroke="#4a4a4a" stroke-width="6.2"/>
<circle cx="3299.5" cy="1008.53" r="3.1" fill="#4a4a4a"/>
<text x="3300.5" y="956" font-size="26.8" fill="#0a0a0a" stroke="#0a0a0a" stroke-width="0.85" text-anchor="middle" textLength="45.5" lengthAdjust="spacingAndGlyphs">min</text>
<text x="3300.5" y="1068.7" font-size="28.7" fill="#0a0a0a" stroke="#0a0a0a" stroke-width="0.7" text-anchor="middle" textLength="90.8" lengthAdjust="spacingAndGlyphs">0.00 %</text>
<path d="M3383.18 1011.17A36.98 36.98 0 1 1 3438.39 1038.82" fill="none" stroke="#4a4a4a" stroke-width="6.25"/>
<path d="M3401.41 1038.82A36.98 36.98 0 0 1 3384.18 1016.37" fill="none" stroke="#6bbff9" stroke-width="6.25"/>
<path d="M3417.97 1007.32L3381.17 1017.18" stroke="#4a4a4a" stroke-width="6.2"/>
<circle cx="3417.97" cy="1007.32" r="3.1" fill="#4a4a4a"/>
<text x="3419.9" y="956" font-size="26.8" fill="#0a0a0a" stroke="#0a0a0a" stroke-width="0.85" text-anchor="middle" textLength="52" lengthAdjust="spacingAndGlyphs">max</text>
<text x="3419.9" y="1068.7" font-size="28.7" fill="#0a0a0a" stroke="#0a0a0a" stroke-width="0.7" text-anchor="middle" textLength="90.8" lengthAdjust="spacingAndGlyphs">15.0 %</text>
<rect x="3267.7" y="1098.7" width="186.2" height="37.5" fill="#ffffff" rx="4.7" stroke="#0a0a0a" stroke-width="2.6"/>
<text x="3360.8" y="1127" font-size="28.6" fill="#0a0a0a" stroke="#0a0a0a" stroke-width="0.69" text-anchor="middle" textLength="103" lengthAdjust="spacingAndGlyphs">INVERT</text>
<path d="M0 0H20A20 20 0 0 0 0 20Z" fill="#ffffff"/>
<path d="M3522 0H3502A20 20 0 0 1 3522 20Z" fill="#ffffff"/>
<path d="M0 1176H20A20 20 0 0 1 0 1156Z" fill="#ffffff"/>
<path d="M3522 1176H3502A20 20 0 0 0 3522 1156Z" fill="#ffffff"/>
</svg>
</body></html>
